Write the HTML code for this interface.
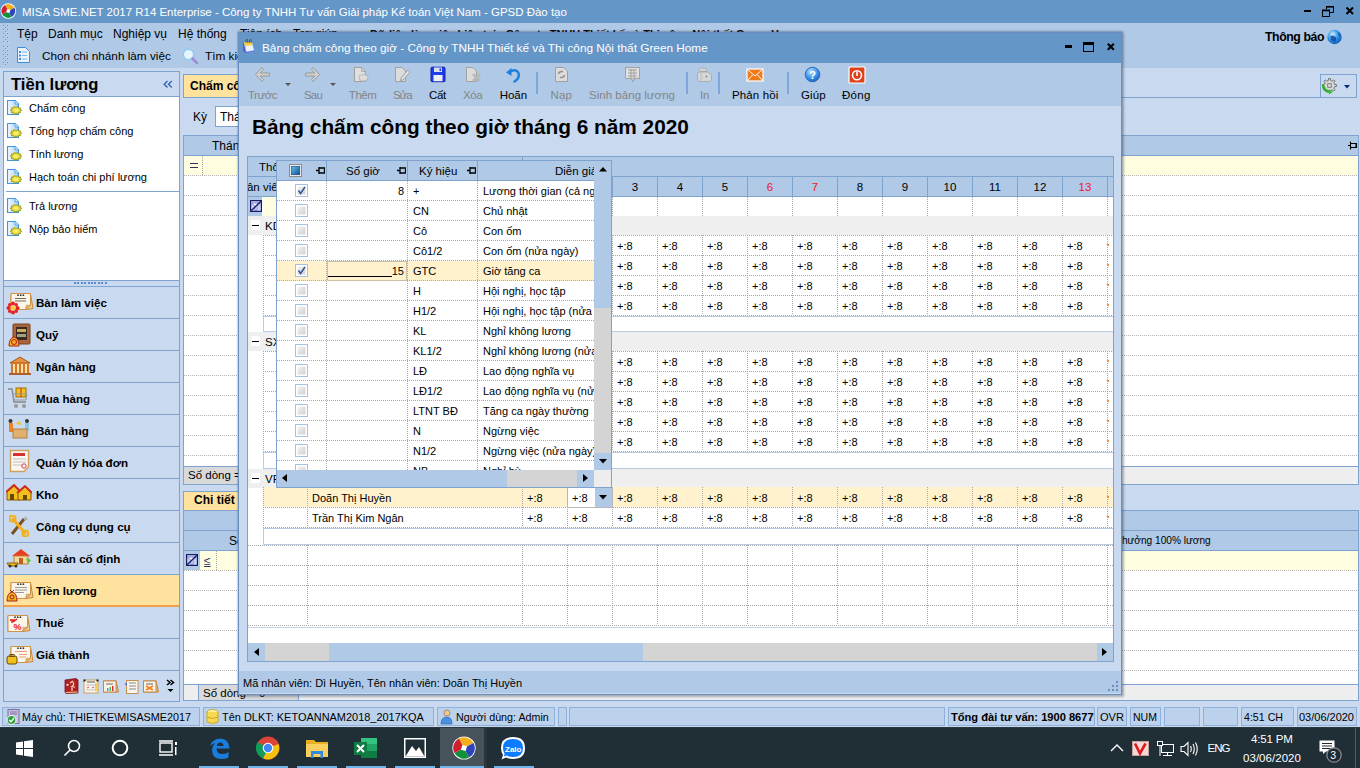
<!DOCTYPE html>
<html><head><meta charset="utf-8">
<style>
*{margin:0;padding:0;box-sizing:border-box}
html,body{width:1360px;height:768px;overflow:hidden;background:#C9DAF0;font-family:"Liberation Sans",sans-serif;font-size:12px;color:#000}
.a{position:absolute}
.t{position:absolute;white-space:nowrap;line-height:16px}
svg{position:absolute}
</style></head><body>
<div class="a" style="left:0px;top:0px;width:1360px;height:23px;background:#6596C8;"></div>
<svg class="a" style="left:0px;top:3px" width="17" height="17" viewBox="0 0 17 17"><circle cx="8.3" cy="8" r="7.8" fill="#fff"/><g transform="rotate(-28 8.3 8)">
 <path d="M8.3 8 L8.3 1.1 A6.9 6.9 0 0 1 15.2 8 Z" fill="#F2B01E"/>
 <path d="M8.3 8 L15.2 8 A6.9 6.9 0 0 1 8.3 14.9 Z" fill="#2E44BC"/>
 <path d="M8.3 8 L8.3 14.9 A6.9 6.9 0 0 1 1.4 8 Z" fill="#12913A"/>
 <path d="M8.3 8 L1.4 8 A6.9 6.9 0 0 1 8.3 1.1 Z" fill="#D0202E"/>
 <rect x="6.6" y="6.3" width="3.4" height="3.4" transform="rotate(45 8.3 8)" fill="#fff"/></g></svg>
<div class="t" style="top:4.03px;font-size:11.47px;color:#fff;left:22px;">MISA SME.NET 2017 R14 Enterprise - Công ty TNHH Tư vấn Giải pháp Kế toán Việt Nam - GPSD Đào tạo</div>
<div class="a" style="left:1304px;top:10px;width:7px;height:2px;background:#000;"></div>
<svg class="a" style="left:1321px;top:5px" width="14" height="12" viewBox="0 0 14 12"><path d="M5.5 4V1.5H12.5V7.5H9" fill="none" stroke="#000" stroke-width="1"/><rect x="5" y="1" width="8" height="1.6" fill="#000"/><rect x="1.5" y="5.5" width="7" height="6" fill="none" stroke="#000"/><rect x="1" y="4.5" width="8" height="1.8" fill="#000"/></svg>
<svg class="a" style="left:1345px;top:6px" width="10" height="10" viewBox="0 0 10 10"><path d="M1.5 1.5L8 8M8 1.5L1.5 8" stroke="#000" stroke-width="2"/></svg>
<div class="a" style="left:0px;top:23px;width:1360px;height:45px;background:#AFC9E7;"></div>
<div class="a" style="left:4px;top:26px;width:1px;height:1px;background:#C2D6EE;"></div>
<div class="a" style="left:3px;top:25px;width:1px;height:1px;background:#8A8A8A;"></div>
<div class="a" style="left:8px;top:26px;width:1px;height:1px;background:#C2D6EE;"></div>
<div class="a" style="left:7px;top:25px;width:1px;height:1px;background:#8A8A8A;"></div>
<div class="a" style="left:6px;top:28px;width:1px;height:1px;background:#C2D6EE;"></div>
<div class="a" style="left:5px;top:27px;width:1px;height:1px;background:#8A8A8A;"></div>
<div class="a" style="left:4px;top:30px;width:1px;height:1px;background:#C2D6EE;"></div>
<div class="a" style="left:3px;top:29px;width:1px;height:1px;background:#8A8A8A;"></div>
<div class="a" style="left:8px;top:30px;width:1px;height:1px;background:#C2D6EE;"></div>
<div class="a" style="left:7px;top:29px;width:1px;height:1px;background:#8A8A8A;"></div>
<div class="a" style="left:6px;top:32px;width:1px;height:1px;background:#C2D6EE;"></div>
<div class="a" style="left:5px;top:31px;width:1px;height:1px;background:#8A8A8A;"></div>
<div class="a" style="left:4px;top:34px;width:1px;height:1px;background:#C2D6EE;"></div>
<div class="a" style="left:3px;top:33px;width:1px;height:1px;background:#8A8A8A;"></div>
<div class="a" style="left:8px;top:34px;width:1px;height:1px;background:#C2D6EE;"></div>
<div class="a" style="left:7px;top:33px;width:1px;height:1px;background:#8A8A8A;"></div>
<div class="a" style="left:6px;top:36px;width:1px;height:1px;background:#C2D6EE;"></div>
<div class="a" style="left:5px;top:35px;width:1px;height:1px;background:#8A8A8A;"></div>
<div class="a" style="left:4px;top:38px;width:1px;height:1px;background:#C2D6EE;"></div>
<div class="a" style="left:3px;top:37px;width:1px;height:1px;background:#8A8A8A;"></div>
<div class="a" style="left:8px;top:38px;width:1px;height:1px;background:#C2D6EE;"></div>
<div class="a" style="left:7px;top:37px;width:1px;height:1px;background:#8A8A8A;"></div>
<div class="a" style="left:6px;top:40px;width:1px;height:1px;background:#C2D6EE;"></div>
<div class="a" style="left:5px;top:39px;width:1px;height:1px;background:#8A8A8A;"></div>
<div class="a" style="left:4px;top:42px;width:1px;height:1px;background:#C2D6EE;"></div>
<div class="a" style="left:3px;top:41px;width:1px;height:1px;background:#8A8A8A;"></div>
<div class="a" style="left:8px;top:42px;width:1px;height:1px;background:#C2D6EE;"></div>
<div class="a" style="left:7px;top:41px;width:1px;height:1px;background:#8A8A8A;"></div>
<div class="a" style="left:4px;top:47px;width:1px;height:1px;background:#C2D6EE;"></div>
<div class="a" style="left:3px;top:46px;width:1px;height:1px;background:#8A8A8A;"></div>
<div class="a" style="left:8px;top:47px;width:1px;height:1px;background:#C2D6EE;"></div>
<div class="a" style="left:7px;top:46px;width:1px;height:1px;background:#8A8A8A;"></div>
<div class="a" style="left:6px;top:49px;width:1px;height:1px;background:#C2D6EE;"></div>
<div class="a" style="left:5px;top:48px;width:1px;height:1px;background:#8A8A8A;"></div>
<div class="a" style="left:4px;top:51px;width:1px;height:1px;background:#C2D6EE;"></div>
<div class="a" style="left:3px;top:50px;width:1px;height:1px;background:#8A8A8A;"></div>
<div class="a" style="left:8px;top:51px;width:1px;height:1px;background:#C2D6EE;"></div>
<div class="a" style="left:7px;top:50px;width:1px;height:1px;background:#8A8A8A;"></div>
<div class="a" style="left:6px;top:53px;width:1px;height:1px;background:#C2D6EE;"></div>
<div class="a" style="left:5px;top:52px;width:1px;height:1px;background:#8A8A8A;"></div>
<div class="a" style="left:4px;top:55px;width:1px;height:1px;background:#C2D6EE;"></div>
<div class="a" style="left:3px;top:54px;width:1px;height:1px;background:#8A8A8A;"></div>
<div class="a" style="left:8px;top:55px;width:1px;height:1px;background:#C2D6EE;"></div>
<div class="a" style="left:7px;top:54px;width:1px;height:1px;background:#8A8A8A;"></div>
<div class="a" style="left:6px;top:57px;width:1px;height:1px;background:#C2D6EE;"></div>
<div class="a" style="left:5px;top:56px;width:1px;height:1px;background:#8A8A8A;"></div>
<div class="a" style="left:4px;top:59px;width:1px;height:1px;background:#C2D6EE;"></div>
<div class="a" style="left:3px;top:58px;width:1px;height:1px;background:#8A8A8A;"></div>
<div class="a" style="left:8px;top:59px;width:1px;height:1px;background:#C2D6EE;"></div>
<div class="a" style="left:7px;top:58px;width:1px;height:1px;background:#8A8A8A;"></div>
<div class="a" style="left:6px;top:61px;width:1px;height:1px;background:#C2D6EE;"></div>
<div class="a" style="left:5px;top:60px;width:1px;height:1px;background:#8A8A8A;"></div>
<div class="a" style="left:4px;top:63px;width:1px;height:1px;background:#C2D6EE;"></div>
<div class="a" style="left:3px;top:62px;width:1px;height:1px;background:#8A8A8A;"></div>
<div class="a" style="left:8px;top:63px;width:1px;height:1px;background:#C2D6EE;"></div>
<div class="a" style="left:7px;top:62px;width:1px;height:1px;background:#8A8A8A;"></div>
<div class="a" style="left:6px;top:65px;width:1px;height:1px;background:#C2D6EE;"></div>
<div class="a" style="left:5px;top:64px;width:1px;height:1px;background:#8A8A8A;"></div>
<div class="t" style="top:25.84px;font-size:12px;left:17px;">Tệp</div>
<div class="t" style="top:25.84px;font-size:12px;left:48px;">Danh mục</div>
<div class="t" style="top:25.84px;font-size:12px;left:113px;">Nghiệp vụ</div>
<div class="t" style="top:25.84px;font-size:12px;left:178px;">Hệ thống</div>
<div class="t" style="top:25.84px;font-size:12px;left:240px;">Tiện ích</div>
<div class="t" style="top:25.84px;font-size:12px;left:293px;">Trợ giúp</div>
<div class="t" style="top:26.19px;font-size:11px;font-weight:bold;left:370px;">Dữ liệu làm việc hiện tại - Công ty TNHH Thiết kế và Thi công Nội thất Green Home</div>
<svg class="a" style="left:17px;top:47px" width="13" height="16" viewBox="0 0 13 16"><path d="M0.5 0.5H8.5L12.5 4.5V15.5H0.5Z" fill="#EAF3FC" stroke="#3F8FD8"/><rect x="2" y="4" width="2" height="2" fill="#3F8FD8"/><rect x="2" y="7.5" width="2" height="2" fill="#3F8FD8"/><rect x="2" y="11" width="2" height="2" fill="#3F8FD8"/><path d="M5 5H10M5 8.5H10M5 12H10" stroke="#7FB4E6"/></svg>
<div class="t" style="top:47.92px;font-size:11.78px;left:42px;">Chọn chi nhánh làm việc</div>
<svg class="a" style="left:182px;top:48px" width="17" height="17" viewBox="0 0 17 17"><circle cx="6.5" cy="6.5" r="5.3" fill="#E6F4FD" stroke="#90CBEF" stroke-width="1.6"/><path d="M10.5 10.5L15 15" stroke="#A08CD6" stroke-width="2.6" stroke-linecap="round"/></svg>
<div class="t" style="top:47.91px;font-size:11.8px;left:205px;">Tìm kiếm</div>
<div class="t" style="top:28.74px;font-size:12.3px;font-weight:bold;left:1265px;letter-spacing:-0.427px;">Thông báo</div>
<svg class="a" style="left:1327px;top:29px" width="16" height="16" viewBox="0 0 16 16"><defs><radialGradient id="gl" cx="38%" cy="32%" r="70%"><stop offset="0" stop-color="#D4F0FF"/><stop offset="0.5" stop-color="#3A9AE8"/><stop offset="1" stop-color="#0A5CB8"/></radialGradient></defs><circle cx="7.5" cy="8" r="7.2" fill="url(#gl)"/><path d="M3.5 7Q6 5.5 8.5 8Q10 10.5 8 12.5Q5.5 13 4 10.5Z" fill="#0A3C9A" opacity="0.75"/><path d="M11 3.5Q13.5 5 13.8 8Q12 7 11 5Z" fill="#0A3C9A" opacity="0.7"/></svg>
<div class="a" style="left:3px;top:71px;width:177px;height:631px;background:#C9DAF0;border:1px solid #7FA3CF"></div>
<div class="a" style="left:4px;top:96px;width:175px;height:1px;background:#7FA3CF;"></div>
<div class="t" style="top:77.22px;font-size:16.67px;font-weight:bold;left:11px;">Tiền lương</div>
<svg class="a" style="left:163px;top:80px" width="10" height="9" viewBox="0 0 10 9"><path d="M4.5 1L1.2 4.3L4.5 7.6M8.8 1L5.5 4.3L8.8 7.6" fill="none" stroke="#3A66B0" stroke-width="1.4"/></svg>
<div class="a" style="left:4px;top:97px;width:175px;height:183px;background:#fff;"></div>
<div class="a" style="left:6px;top:191px;width:173px;height:1px;background:#7FA3CF;"></div>
<svg class="a" style="left:6px;top:99px" width="17" height="17" viewBox="0 0 17 17"><defs><linearGradient id="dg" x1="0" y1="0" x2="1" y2="0"><stop offset="0" stop-color="#F4F8FF"/><stop offset="1" stop-color="#A8D0F4"/></linearGradient><radialGradient id="sg"><stop offset="0" stop-color="#FFF880"/><stop offset="1" stop-color="#D8C820"/></radialGradient></defs><path d="M1.5 1.5H9L12.5 5V15.5H1.5Z" fill="url(#dg)" stroke="#3C96E0" stroke-width="1.1" stroke-linejoin="round"/><path d="M9 1.5V5H12.5" fill="#DDEEFF" stroke="#3C96E0" stroke-width="0.8"/><polygon points="15.80,11.30 13.97,12.19 14.69,13.65 12.45,13.63 11.79,15.10 10.00,14.18 8.21,15.10 7.55,13.63 5.31,13.65 6.03,12.19 4.20,11.30 6.03,10.41 5.31,8.95 7.55,8.97 8.21,7.50 10.00,8.42 11.79,7.50 12.45,8.97 14.69,8.95 13.97,10.41" fill="url(#sg)" stroke="#A09A10" stroke-width="0.9"/></svg>
<div class="t" style="top:100.19px;font-size:11px;left:29px;">Chấm công</div>
<svg class="a" style="left:6px;top:122px" width="17" height="17" viewBox="0 0 17 17"><defs><linearGradient id="dg" x1="0" y1="0" x2="1" y2="0"><stop offset="0" stop-color="#F4F8FF"/><stop offset="1" stop-color="#A8D0F4"/></linearGradient><radialGradient id="sg"><stop offset="0" stop-color="#FFF880"/><stop offset="1" stop-color="#D8C820"/></radialGradient></defs><path d="M1.5 1.5H9L12.5 5V15.5H1.5Z" fill="url(#dg)" stroke="#3C96E0" stroke-width="1.1" stroke-linejoin="round"/><path d="M9 1.5V5H12.5" fill="#DDEEFF" stroke="#3C96E0" stroke-width="0.8"/><polygon points="15.80,11.30 13.97,12.19 14.69,13.65 12.45,13.63 11.79,15.10 10.00,14.18 8.21,15.10 7.55,13.63 5.31,13.65 6.03,12.19 4.20,11.30 6.03,10.41 5.31,8.95 7.55,8.97 8.21,7.50 10.00,8.42 11.79,7.50 12.45,8.97 14.69,8.95 13.97,10.41" fill="url(#sg)" stroke="#A09A10" stroke-width="0.9"/></svg>
<div class="t" style="top:123.19px;font-size:11px;left:29px;">Tổng hợp chấm công</div>
<svg class="a" style="left:6px;top:145px" width="17" height="17" viewBox="0 0 17 17"><defs><linearGradient id="dg" x1="0" y1="0" x2="1" y2="0"><stop offset="0" stop-color="#F4F8FF"/><stop offset="1" stop-color="#A8D0F4"/></linearGradient><radialGradient id="sg"><stop offset="0" stop-color="#FFF880"/><stop offset="1" stop-color="#D8C820"/></radialGradient></defs><path d="M1.5 1.5H9L12.5 5V15.5H1.5Z" fill="url(#dg)" stroke="#3C96E0" stroke-width="1.1" stroke-linejoin="round"/><path d="M9 1.5V5H12.5" fill="#DDEEFF" stroke="#3C96E0" stroke-width="0.8"/><polygon points="15.80,11.30 13.97,12.19 14.69,13.65 12.45,13.63 11.79,15.10 10.00,14.18 8.21,15.10 7.55,13.63 5.31,13.65 6.03,12.19 4.20,11.30 6.03,10.41 5.31,8.95 7.55,8.97 8.21,7.50 10.00,8.42 11.79,7.50 12.45,8.97 14.69,8.95 13.97,10.41" fill="url(#sg)" stroke="#A09A10" stroke-width="0.9"/></svg>
<div class="t" style="top:146.19px;font-size:11px;left:29px;">Tính lương</div>
<svg class="a" style="left:6px;top:168px" width="17" height="17" viewBox="0 0 17 17"><defs><linearGradient id="dg" x1="0" y1="0" x2="1" y2="0"><stop offset="0" stop-color="#F4F8FF"/><stop offset="1" stop-color="#A8D0F4"/></linearGradient><radialGradient id="sg"><stop offset="0" stop-color="#FFF880"/><stop offset="1" stop-color="#D8C820"/></radialGradient></defs><path d="M1.5 1.5H9L12.5 5V15.5H1.5Z" fill="url(#dg)" stroke="#3C96E0" stroke-width="1.1" stroke-linejoin="round"/><path d="M9 1.5V5H12.5" fill="#DDEEFF" stroke="#3C96E0" stroke-width="0.8"/><polygon points="15.80,11.30 13.97,12.19 14.69,13.65 12.45,13.63 11.79,15.10 10.00,14.18 8.21,15.10 7.55,13.63 5.31,13.65 6.03,12.19 4.20,11.30 6.03,10.41 5.31,8.95 7.55,8.97 8.21,7.50 10.00,8.42 11.79,7.50 12.45,8.97 14.69,8.95 13.97,10.41" fill="url(#sg)" stroke="#A09A10" stroke-width="0.9"/></svg>
<div class="t" style="top:169.19px;font-size:11px;left:29px;">Hạch toán chi phí lương</div>
<svg class="a" style="left:6px;top:197px" width="17" height="17" viewBox="0 0 17 17"><defs><linearGradient id="dg" x1="0" y1="0" x2="1" y2="0"><stop offset="0" stop-color="#F4F8FF"/><stop offset="1" stop-color="#A8D0F4"/></linearGradient><radialGradient id="sg"><stop offset="0" stop-color="#FFF880"/><stop offset="1" stop-color="#D8C820"/></radialGradient></defs><path d="M1.5 1.5H9L12.5 5V15.5H1.5Z" fill="url(#dg)" stroke="#3C96E0" stroke-width="1.1" stroke-linejoin="round"/><path d="M9 1.5V5H12.5" fill="#DDEEFF" stroke="#3C96E0" stroke-width="0.8"/><polygon points="15.80,11.30 13.97,12.19 14.69,13.65 12.45,13.63 11.79,15.10 10.00,14.18 8.21,15.10 7.55,13.63 5.31,13.65 6.03,12.19 4.20,11.30 6.03,10.41 5.31,8.95 7.55,8.97 8.21,7.50 10.00,8.42 11.79,7.50 12.45,8.97 14.69,8.95 13.97,10.41" fill="url(#sg)" stroke="#A09A10" stroke-width="0.9"/></svg>
<div class="t" style="top:198.19px;font-size:11px;left:29px;">Trả lương</div>
<svg class="a" style="left:6px;top:220px" width="17" height="17" viewBox="0 0 17 17"><defs><linearGradient id="dg" x1="0" y1="0" x2="1" y2="0"><stop offset="0" stop-color="#F4F8FF"/><stop offset="1" stop-color="#A8D0F4"/></linearGradient><radialGradient id="sg"><stop offset="0" stop-color="#FFF880"/><stop offset="1" stop-color="#D8C820"/></radialGradient></defs><path d="M1.5 1.5H9L12.5 5V15.5H1.5Z" fill="url(#dg)" stroke="#3C96E0" stroke-width="1.1" stroke-linejoin="round"/><path d="M9 1.5V5H12.5" fill="#DDEEFF" stroke="#3C96E0" stroke-width="0.8"/><polygon points="15.80,11.30 13.97,12.19 14.69,13.65 12.45,13.63 11.79,15.10 10.00,14.18 8.21,15.10 7.55,13.63 5.31,13.65 6.03,12.19 4.20,11.30 6.03,10.41 5.31,8.95 7.55,8.97 8.21,7.50 10.00,8.42 11.79,7.50 12.45,8.97 14.69,8.95 13.97,10.41" fill="url(#sg)" stroke="#A09A10" stroke-width="0.9"/></svg>
<div class="t" style="top:221.19px;font-size:11px;left:29px;">Nộp bảo hiểm</div>
<div class="a" style="left:4px;top:280px;width:175px;height:1px;background:#7FA3CF;"></div>
<div class="a" style="left:74.0px;top:282px;width:2px;height:2px;background:#5A8AD0;"></div>
<div class="a" style="left:77.4px;top:282px;width:2px;height:2px;background:#5A8AD0;"></div>
<div class="a" style="left:80.8px;top:282px;width:2px;height:2px;background:#5A8AD0;"></div>
<div class="a" style="left:84.2px;top:282px;width:2px;height:2px;background:#5A8AD0;"></div>
<div class="a" style="left:87.6px;top:282px;width:2px;height:2px;background:#5A8AD0;"></div>
<div class="a" style="left:91.0px;top:282px;width:2px;height:2px;background:#5A8AD0;"></div>
<div class="a" style="left:94.4px;top:282px;width:2px;height:2px;background:#5A8AD0;"></div>
<div class="a" style="left:97.8px;top:282px;width:2px;height:2px;background:#5A8AD0;"></div>
<div class="a" style="left:101.2px;top:282px;width:2px;height:2px;background:#5A8AD0;"></div>
<div class="a" style="left:104.6px;top:282px;width:2px;height:2px;background:#5A8AD0;"></div>
<div class="a" style="left:4px;top:286px;width:175px;height:1px;background:#7FA3CF;"></div>
<div class="t" style="top:294.98px;font-size:11.6px;font-weight:bold;left:36px;">Bàn làm việc</div>
<div class="a" style="left:4px;top:318px;width:175px;height:1px;background:#7FA3CF;"></div>
<div class="t" style="top:326.98px;font-size:11.6px;font-weight:bold;left:36px;">Quỹ</div>
<div class="a" style="left:4px;top:350px;width:175px;height:1px;background:#7FA3CF;"></div>
<div class="t" style="top:358.98px;font-size:11.6px;font-weight:bold;left:36px;">Ngân hàng</div>
<div class="a" style="left:4px;top:382px;width:175px;height:1px;background:#7FA3CF;"></div>
<div class="t" style="top:390.98px;font-size:11.6px;font-weight:bold;left:36px;">Mua hàng</div>
<div class="a" style="left:4px;top:414px;width:175px;height:1px;background:#7FA3CF;"></div>
<div class="t" style="top:422.98px;font-size:11.6px;font-weight:bold;left:36px;">Bán hàng</div>
<div class="a" style="left:4px;top:446px;width:175px;height:1px;background:#7FA3CF;"></div>
<div class="t" style="top:454.98px;font-size:11.6px;font-weight:bold;left:36px;">Quản lý hóa đơn</div>
<div class="a" style="left:4px;top:478px;width:175px;height:1px;background:#7FA3CF;"></div>
<div class="t" style="top:486.98px;font-size:11.6px;font-weight:bold;left:36px;">Kho</div>
<div class="a" style="left:4px;top:510px;width:175px;height:1px;background:#7FA3CF;"></div>
<div class="t" style="top:518.98px;font-size:11.6px;font-weight:bold;left:36px;">Công cụ dụng cụ</div>
<div class="a" style="left:4px;top:542px;width:175px;height:1px;background:#7FA3CF;"></div>
<div class="t" style="top:550.98px;font-size:11.6px;font-weight:bold;left:36px;">Tài sản cố định</div>
<div class="a" style="left:4px;top:575px;width:175px;height:31px;background:#FFE29E;"></div>
<div class="a" style="left:4px;top:574px;width:175px;height:1px;background:#7FA3CF;"></div>
<div class="t" style="top:582.98px;font-size:11.6px;font-weight:bold;left:36px;">Tiền lương</div>
<div class="a" style="left:4px;top:606px;width:175px;height:1px;background:#7FA3CF;"></div>
<div class="t" style="top:614.98px;font-size:11.6px;font-weight:bold;left:36px;">Thuế</div>
<div class="a" style="left:4px;top:638px;width:175px;height:1px;background:#7FA3CF;"></div>
<div class="t" style="top:646.98px;font-size:11.6px;font-weight:bold;left:36px;">Giá thành</div>
<div class="a" style="left:4px;top:605px;width:175px;height:2px;background:#F2A04A;"></div>
<div class="a" style="left:4px;top:670px;width:175px;height:1px;background:#7FA3CF;"></div>
<svg class="a" style="left:10px;top:292px" width="24" height="19" viewBox="0 0 24 19"><path d="M1 1.5H20.5L23 16.5L16 17.5H1Z" fill="#EDCB90" stroke="#C88838"/><path d="M1 1.5H20.5V13L15.5 17.5H1Z" fill="#FBF5EA" stroke="#D09448"/><path d="M15.5 17.5L16.3 13.3H20.5Z" fill="#E4B878" stroke="#C88838" stroke-width="0.6"/><circle cx="8" cy="3.2" r="0.9" fill="#333"/><circle cx="10.7" cy="3.2" r="0.9" fill="#333"/><circle cx="13.4" cy="3.2" r="0.9" fill="#333"/><path d="M5 6.5H16M5 9H16" stroke="#7a6a50" stroke-width="1.1"/></svg>
<svg class="a" style="left:6px;top:301px" width="14" height="14" viewBox="0 0 14 14"><g fill="#E82020"><circle cx="7" cy="2.5" r="2"/><circle cx="7" cy="11.5" r="2"/><circle cx="2.5" cy="7" r="2"/><circle cx="11.5" cy="7" r="2"/><circle cx="3.8" cy="3.8" r="1.8"/><circle cx="10.2" cy="10.2" r="1.8"/><circle cx="3.8" cy="10.2" r="1.8"/><circle cx="10.2" cy="3.8" r="1.8"/></g><circle cx="7" cy="7" r="2.3" fill="#F8D040"/></svg>
<svg class="a" style="left:8px;top:323px" width="24" height="24" viewBox="0 0 24 24"><rect x="5" y="1" width="17" height="20" rx="1" fill="#A8643A" stroke="#7A4020"/><rect x="8" y="4" width="11" height="13" fill="#3A2A20"/><rect x="9" y="6" width="9" height="3" fill="#C8B060"/><rect x="9" y="11" width="9" height="3" fill="#A0A080"/><path d="M1 23Q1 15 6 14Q11 15 11 23Z" fill="#F0B020" stroke="#B02020"/><circle cx="6" cy="19" r="2.5" fill="none" stroke="#B02020"/></svg>
<svg class="a" style="left:8px;top:356px" width="24" height="20" viewBox="0 0 24 20"><path d="M2 7L12 1L22 7Z" fill="#E89040" stroke="#A05A20"/><rect x="3" y="7" width="18" height="10" fill="#D07A30"/><rect x="5" y="8" width="2" height="9" fill="#FFE0A0"/><rect x="9" y="8" width="2" height="9" fill="#FFE0A0"/><rect x="13" y="8" width="2" height="9" fill="#FFE0A0"/><rect x="17" y="8" width="2" height="9" fill="#FFE0A0"/><rect x="1" y="17" width="22" height="2" fill="#B06030"/></svg>
<svg class="a" style="left:7px;top:386px" width="24" height="24" viewBox="0 0 24 24"><path d="M1 3L5 3L7 16H19" fill="none" stroke="#888" stroke-width="1.4"/><rect x="9" y="2" width="10" height="9" fill="#F2C020" stroke="#A07000"/><path d="M14 2V11" stroke="#D02020"/><path d="M6 8H20L19 14H7Z" fill="none" stroke="#999"/><circle cx="9" cy="20" r="2" fill="#999"/><circle cx="17" cy="20" r="2" fill="#999"/></svg>
<svg class="a" style="left:7px;top:418px" width="24" height="22" viewBox="0 0 24 22"><circle cx="3.5" cy="3" r="2" fill="#333"/><rect x="2" y="5" width="4" height="9" fill="#F08020"/><circle cx="20" cy="3" r="2" fill="#333"/><rect x="18" y="5" width="4" height="8" fill="#8CC0E0"/><rect x="6" y="11" width="14" height="9" fill="#E0B070" stroke="#B08040"/><path d="M9 6L12 3L15 7Z" fill="#F2C020"/></svg>
<svg class="a" style="left:9px;top:449px" width="21" height="24" viewBox="0 0 21 24"><path d="M1.5 1.5H19.5V18L15 22.5H1.5Z" fill="#FAF6EE" stroke="#D0A060" stroke-width="1.4"/><rect x="4" y="4" width="12" height="3" fill="#D83030"/><path d="M4 10H17M4 13H17M4 16H14" stroke="#C0C0C0"/><circle cx="15" cy="17" r="2.2" fill="none" stroke="#D04060"/></svg>
<svg class="a" style="left:6px;top:484px" width="26" height="18" viewBox="0 0 26 18"><path d="M1 8L8 2L14 8V16H1Z" fill="#F2C020" stroke="#8A5A00"/><path d="M0 8L8 1L15 8" fill="none" stroke="#D03020" stroke-width="2"/><path d="M12 9L19 3L25 9V16H12Z" fill="#F2C020" stroke="#8A5A00"/><path d="M11 9L19 2L26 9" fill="none" stroke="#D03020" stroke-width="2"/><rect x="4" y="10" width="4" height="6" fill="#6A4A00"/><rect x="17" y="11" width="4" height="5" fill="#6A4A00"/></svg>
<svg class="a" style="left:9px;top:515px" width="20" height="22" viewBox="0 0 20 22"><path d="M3 19L15 4" stroke="#7A5020" stroke-width="3"/><path d="M16 2L18 5" stroke="#aaa" stroke-width="2"/><path d="M3 3L17 19" stroke="#F0B020" stroke-width="3"/><circle cx="3.5" cy="3.5" r="3" fill="none" stroke="#F0B020" stroke-width="2"/><circle cx="16.5" cy="18.5" r="3" fill="none" stroke="#F0B020" stroke-width="2"/></svg>
<svg class="a" style="left:6px;top:548px" width="26" height="20" viewBox="0 0 26 20"><path d="M6 8L15 1L24 8Z" fill="#E84020"/><rect x="8" y="8" width="14" height="8" fill="#F6D8A0" stroke="#C08040"/><rect x="13" y="10" width="4" height="6" fill="#C06020"/><path d="M1 15H12L10 18H3Z" fill="#F2C020" stroke="#8A6000"/><circle cx="4" cy="18" r="1.5" fill="#333"/><circle cx="10" cy="18" r="1.5" fill="#333"/><path d="M20 10L25 12L22 16Z" fill="#60C040"/></svg>
<svg class="a" style="left:10px;top:581px" width="24" height="19" viewBox="0 0 24 19"><path d="M1 1.5H20.5L23 16.5L16 17.5H1Z" fill="#EDCB90" stroke="#C88838"/><path d="M1 1.5H20.5V13L15.5 17.5H1Z" fill="#FBF5EA" stroke="#D09448"/><path d="M15.5 17.5L16.3 13.3H20.5Z" fill="#E4B878" stroke="#C88838" stroke-width="0.6"/><circle cx="8" cy="3.2" r="0.9" fill="#333"/><circle cx="10.7" cy="3.2" r="0.9" fill="#333"/><circle cx="13.4" cy="3.2" r="0.9" fill="#333"/><path d="M5 6.5H17M5 9H17M5 11.5H14" stroke="#9a9a9a" stroke-width="1.1"/></svg>
<svg class="a" style="left:6px;top:588px" width="12" height="14" viewBox="0 0 12 14"><path d="M1 13Q1 5 6 4Q11 5 11 13Z" fill="#F0B020" stroke="#B02020"/><path d="M4 2L6 4L8 2" stroke="#B02020" fill="none"/><circle cx="6" cy="9" r="2" fill="none" stroke="#B02020"/></svg>
<svg class="a" style="left:7px;top:614px" width="24" height="19" viewBox="0 0 24 19"><path d="M1 1.5H20.5L23 16.5L16 17.5H1Z" fill="#EDCB90" stroke="#C88838"/><path d="M1 1.5H20.5V13L15.5 17.5H1Z" fill="#FBF5EA" stroke="#D09448"/><path d="M15.5 17.5L16.3 13.3H20.5Z" fill="#E4B878" stroke="#C88838" stroke-width="0.6"/><circle cx="8" cy="3.2" r="0.9" fill="#333"/><circle cx="10.7" cy="3.2" r="0.9" fill="#333"/><circle cx="13.4" cy="3.2" r="0.9" fill="#333"/><text x="6.5" y="15.5" font-size="9" fill="#E81818" font-weight="bold" font-family="Liberation Sans">%</text><path d="M3 6H8M5 6V9M6 8L10 5" stroke="#E81818" stroke-width="1.4"/></svg>
<svg class="a" style="left:10px;top:645px" width="24" height="19" viewBox="0 0 24 19"><path d="M1 1.5H20.5L23 16.5L16 17.5H1Z" fill="#EDCB90" stroke="#C88838"/><path d="M1 1.5H20.5V13L15.5 17.5H1Z" fill="#FBF5EA" stroke="#D09448"/><path d="M15.5 17.5L16.3 13.3H20.5Z" fill="#E4B878" stroke="#C88838" stroke-width="0.6"/><circle cx="8" cy="3.2" r="0.9" fill="#333"/><circle cx="10.7" cy="3.2" r="0.9" fill="#333"/><circle cx="13.4" cy="3.2" r="0.9" fill="#333"/><path d="M5 6.5H17M9 9.5H17M9 12H16" stroke="#E8A080" stroke-width="1.1"/></svg>
<svg class="a" style="left:6px;top:654px" width="12" height="11" viewBox="0 0 12 11"><rect x="1" y="2" width="10" height="8" rx="2" fill="#F0C020" stroke="#6A4A00"/><rect x="4" y="0.5" width="4" height="2" fill="none" stroke="#6A4A00"/></svg>
<svg class="a" style="left:64px;top:678px" width="15" height="16" viewBox="0 0 15 16"><path d="M1 2L12 0.5L14 2V15L2 15.5L1 14Z" fill="#B02028" stroke="#801018" stroke-width="0.8"/><path d="M2 14.5L13.5 14" stroke="#F0D090" stroke-width="1.2"/><rect x="2.5" y="6" width="2" height="1.6" fill="#fff"/><path d="M6 5L9 3M9 4Q11 7 7 9H11M8 10V13" stroke="#F8E0A0" stroke-width="1.2" fill="none"/></svg>
<svg class="a" style="left:83px;top:679px" width="16" height="15" viewBox="0 0 16 15"><rect x="1" y="1" width="14" height="13" fill="#FAF6EE" stroke="#C8A060"/><rect x="0.5" y="0.5" width="2" height="2" fill="#222"/><rect x="13.5" y="0.5" width="2" height="2" fill="#222"/><path d="M4 3H12" stroke="#555"/><path d="M4 9L6 8M9 9L11 8" stroke="#E06080" stroke-width="1.2"/><path d="M3 6H13M3 11H13" stroke="#C0C0C0"/><path d="M13 4V12" stroke="#F0C020" stroke-width="1.5"/></svg>
<svg class="a" style="left:103px;top:680px" width="16" height="13" viewBox="0 0 16 13"><path d="M0.5 1H13L15.5 12H0.5Z" fill="#E8C890" stroke="#C08040"/><rect x="0.5" y="1" width="12.5" height="11" fill="#FAF4E8" stroke="#C08848"/><path d="M3 4H10" stroke="#666"/><rect x="4" y="8" width="1.5" height="3" fill="#40A0E0"/><rect x="6.5" y="7" width="1.5" height="4" fill="#50C050"/><rect x="9" y="6" width="1.5" height="5" fill="#E03030"/></svg>
<svg class="a" style="left:124px;top:680px" width="15" height="14" viewBox="0 0 15 14"><rect x="2.5" y="0.5" width="11.5" height="13" fill="#FAF6EE" stroke="#C89050"/><path d="M5 3H12M5 6H12M5 9H12" stroke="#888"/><path d="M0.5 4L3 2.5V6Z" fill="#5A6AD0"/></svg>
<svg class="a" style="left:143px;top:680px" width="16" height="13" viewBox="0 0 16 13"><path d="M0.5 1H13L15.5 12H0.5Z" fill="#E8C890" stroke="#C08040"/><rect x="0.5" y="1" width="12.5" height="11" fill="#FAF4E8" stroke="#C08848"/><path d="M3 4H10" stroke="#666"/><path d="M3 6L10 10M10 6L3 10" stroke="#F08020" stroke-width="1.6"/></svg>
<svg class="a" style="left:166px;top:679px" width="9" height="14" viewBox="0 0 9 14"><path d="M1 1L4 3.5L1 6M4.5 1L7.5 3.5L4.5 6" fill="none" stroke="#000" stroke-width="1.5"/><path d="M1.5 10H7.5L4.5 13Z" fill="#000"/></svg>
<div class="a" style="left:183px;top:74px;width:120px;height:24px;background:#FFE29E;border:1px solid #7FA3CF;border-bottom:none"></div>
<div class="t" style="top:77.84px;font-size:12px;font-weight:bold;left:190px;">Chấm công</div>
<div class="a" style="left:183px;top:97px;width:1137px;height:1px;background:#7FA3CF;"></div>
<div class="a" style="left:1320px;top:74px;width:37px;height:24px;background:#C9DAF0;border:1px solid #7FA3CF"></div>
<svg class="a" style="left:1322px;top:78px" width="16" height="17" viewBox="0 0 16 17"><path d="M6.39,2.42 L6.60,0.56 L8.40,0.56 L8.61,2.42 L10.30,3.12 L11.77,1.95 L13.05,3.23 L11.88,4.70 L12.58,6.39 L14.44,6.60 L14.44,8.40 L12.58,8.61 L11.88,10.30 L13.05,11.77 L11.77,13.05 L10.30,11.88 L8.61,12.58 L8.40,14.44 L6.60,14.44 L6.39,12.58 L4.70,11.88 L3.23,13.05 L1.95,11.77 L3.12,10.30 L2.42,8.61 L0.56,8.40 L0.56,6.60 L2.42,6.39 L3.12,4.70 L1.95,3.23 L3.23,1.95 L4.70,3.12Z" fill="#D8D8D8" stroke="#666" stroke-width="0.9"/><rect x="5.8" y="5.8" width="3.4" height="3.4" fill="#E8F0FA" stroke="#666" stroke-width="0.9"/><path d="M1 6.5Q1 13 8 14" fill="none" stroke="#30B030" stroke-width="2.4"/><path d="M7 11L11 14L7 16.5Z" fill="#40C040"/></svg>
<svg class="a" style="left:1344px;top:85px" width="6" height="4" viewBox="0 0 6 4"><path d="M0 0H6L3 3.5Z" fill="#0A2A80"/></svg>
<div class="t" style="top:108.84px;font-size:12px;left:193px;">Kỳ</div>
<div class="a" style="left:215px;top:106px;width:40px;height:21px;background:#fff;border:1px solid #7FA3CF"></div>
<div class="t" style="top:108.84px;font-size:12px;left:220px;">Tháng 6</div>
<div class="a" style="left:183px;top:135px;width:1176px;height:350px;background:#fff;border:1px solid #7FA3CF"></div>
<div class="a" style="left:184px;top:136px;width:1174px;height:19px;background:#AFC9E7;"></div>
<div class="a" style="left:184px;top:155px;width:1174px;height:1px;background:#7FA3CF;"></div>
<div class="t" style="top:137.84px;font-size:12px;left:212px;">Tháng</div>
<svg class="a" style="left:1348px;top:141px" width="10" height="9" viewBox="0 0 10 9"><path d="M0 4.5H2.5M2.5 0.5V8.5M2.5 2.5H8.5V6.5H2.5" fill="none" stroke="#000" stroke-width="1.1"/><rect x="7.5" y="2" width="1.5" height="5" fill="#000"/></svg>
<div class="a" style="left:184px;top:156px;width:1174px;height:19px;background:#FFFDE0;"></div>
<div class="a" style="left:190px;top:163px;width:8px;height:1.3px;background:#303060;"></div>
<div class="a" style="left:190px;top:166.5px;width:8px;height:1.3px;background:#303060;"></div>
<div class="a" style="left:202px;top:156px;width:1px;height:19px;background:repeating-linear-gradient(180deg,#A8A8A8 0 1px,transparent 1px 2px);"></div>
<div class="a" style="left:184px;top:175px;width:1174px;height:1px;background:repeating-linear-gradient(90deg,#B4B4B4 0 1px,transparent 1px 2px);"></div>
<div class="a" style="left:184px;top:195px;width:1174px;height:1px;background:repeating-linear-gradient(90deg,#B4B4B4 0 1px,transparent 1px 2px);"></div>
<div class="a" style="left:184px;top:215px;width:1174px;height:1px;background:repeating-linear-gradient(90deg,#B4B4B4 0 1px,transparent 1px 2px);"></div>
<div class="a" style="left:184px;top:235px;width:1174px;height:1px;background:repeating-linear-gradient(90deg,#B4B4B4 0 1px,transparent 1px 2px);"></div>
<div class="a" style="left:184px;top:255px;width:1174px;height:1px;background:repeating-linear-gradient(90deg,#B4B4B4 0 1px,transparent 1px 2px);"></div>
<div class="a" style="left:184px;top:275px;width:1174px;height:1px;background:repeating-linear-gradient(90deg,#B4B4B4 0 1px,transparent 1px 2px);"></div>
<div class="a" style="left:184px;top:295px;width:1174px;height:1px;background:repeating-linear-gradient(90deg,#B4B4B4 0 1px,transparent 1px 2px);"></div>
<div class="a" style="left:184px;top:315px;width:1174px;height:1px;background:repeating-linear-gradient(90deg,#B4B4B4 0 1px,transparent 1px 2px);"></div>
<div class="a" style="left:184px;top:335px;width:1174px;height:1px;background:repeating-linear-gradient(90deg,#B4B4B4 0 1px,transparent 1px 2px);"></div>
<div class="a" style="left:184px;top:355px;width:1174px;height:1px;background:repeating-linear-gradient(90deg,#B4B4B4 0 1px,transparent 1px 2px);"></div>
<div class="a" style="left:184px;top:375px;width:1174px;height:1px;background:repeating-linear-gradient(90deg,#B4B4B4 0 1px,transparent 1px 2px);"></div>
<div class="a" style="left:184px;top:395px;width:1174px;height:1px;background:repeating-linear-gradient(90deg,#B4B4B4 0 1px,transparent 1px 2px);"></div>
<div class="a" style="left:184px;top:415px;width:1174px;height:1px;background:repeating-linear-gradient(90deg,#B4B4B4 0 1px,transparent 1px 2px);"></div>
<div class="a" style="left:184px;top:435px;width:1174px;height:1px;background:repeating-linear-gradient(90deg,#B4B4B4 0 1px,transparent 1px 2px);"></div>
<div class="a" style="left:184px;top:455px;width:1174px;height:1px;background:repeating-linear-gradient(90deg,#B4B4B4 0 1px,transparent 1px 2px);"></div>
<div class="a" style="left:184px;top:466px;width:1174px;height:18px;background:#EEEEEE;border-top:1px solid #7FA3CF"></div>
<div class="a" style="left:184px;top:467px;width:140px;height:17px;background:#D9D9D9;"></div>
<div class="t" style="top:467.02px;font-size:11.5px;left:188px;">Số dòng = 0</div>
<div class="a" style="left:183px;top:491px;width:120px;height:20px;background:#FFE29E;border:1px solid #7FA3CF;border-bottom:none"></div>
<div class="t" style="top:491.84px;font-size:12px;font-weight:bold;left:194px;">Chi tiết</div>
<div class="a" style="left:183px;top:510px;width:1176px;height:191px;background:#fff;border:1px solid #7FA3CF"></div>
<div class="a" style="left:184px;top:511px;width:1174px;height:19px;background:#AFC9E7;"></div>
<div class="a" style="left:184px;top:530px;width:1174px;height:1px;background:#7FA3CF;"></div>
<div class="a" style="left:184px;top:531px;width:1174px;height:19px;background:#AFC9E7;"></div>
<div class="a" style="left:184px;top:550px;width:1174px;height:1px;background:#7FA3CF;"></div>
<div class="t" style="top:532.84px;font-size:12px;left:229px;">Số chứng từ</div>
<div class="t" style="top:533.48px;font-size:10.15px;left:1093.3246640625px;">Được hưởng 100% lương</div>
<div class="a" style="left:184px;top:551px;width:1174px;height:19px;background:#FFFDE0;"></div>
<div class="a" style="left:184px;top:551px;width:16px;height:19px;background:#AFC9E7;"></div>
<svg class="a" style="left:186px;top:554px" width="12" height="12" viewBox="0 0 12 12"><rect x="0.6" y="0.6" width="10.8" height="10.8" fill="#BEDCF8" stroke="#1E1A5E" stroke-width="1.2"/><path d="M1.5 3H10.5L7 6.5V10.5H5V6.5Z" fill="#fff" stroke="#6A5AD8" stroke-width="0.8"/><path d="M1.2 10.8L10.8 1.2" stroke="#1E1A5E" stroke-width="1.3"/></svg>
<div class="t" style="top:552.84px;font-size:12px;color:#303060;left:204px;"><u>≤</u></div>
<div class="a" style="left:216px;top:551px;width:1px;height:19px;background:repeating-linear-gradient(180deg,#A8A8A8 0 1px,transparent 1px 2px);"></div>
<div class="a" style="left:184px;top:570px;width:1174px;height:1px;background:repeating-linear-gradient(90deg,#B4B4B4 0 1px,transparent 1px 2px);"></div>
<div class="a" style="left:184px;top:590px;width:1174px;height:1px;background:repeating-linear-gradient(90deg,#B4B4B4 0 1px,transparent 1px 2px);"></div>
<div class="a" style="left:184px;top:610px;width:1174px;height:1px;background:repeating-linear-gradient(90deg,#B4B4B4 0 1px,transparent 1px 2px);"></div>
<div class="a" style="left:184px;top:630px;width:1174px;height:1px;background:repeating-linear-gradient(90deg,#B4B4B4 0 1px,transparent 1px 2px);"></div>
<div class="a" style="left:184px;top:650px;width:1174px;height:1px;background:repeating-linear-gradient(90deg,#B4B4B4 0 1px,transparent 1px 2px);"></div>
<div class="a" style="left:184px;top:670px;width:1174px;height:1px;background:repeating-linear-gradient(90deg,#B4B4B4 0 1px,transparent 1px 2px);"></div>
<div class="a" style="left:184px;top:684px;width:1174px;height:16px;background:#EEEEEE;border-top:1px solid #7FA3CF"></div>
<div class="a" style="left:184px;top:685px;width:15px;height:15px;background:#EEEEEE;border-right:1px solid #7FA3CF"></div>
<div class="a" style="left:199px;top:685px;width:100px;height:15px;background:#D9D9D9;border-right:1px solid #7FA3CF"></div>
<div class="t" style="top:685.02px;font-size:11.5px;left:203px;">Số dòng = 0</div>
<div class="a" style="left:238px;top:32px;width:884px;height:663px;background:#C9DAF0;box-shadow:1px 1px 2px 1px rgba(40,60,90,0.35),0 -1px 2px 0 rgba(40,60,90,0.3);border:1px solid #6A8FBF"></div>
<div class="a" style="left:239px;top:33px;width:882px;height:30px;background:#6596C8;"></div>
<svg class="a" style="left:241px;top:38px" width="15" height="17" viewBox="0 0 15 17"><path d="M2 4H11L14 13L5 15L2 13Z" fill="#6A50D8"/><path d="M3 4H11L13.5 12.5L5 14Z" fill="#EAF4FF" stroke="#58A0F0" stroke-width="0.6"/><path d="M3 4H11L11.8 7L3.8 8Z" fill="#F8CF40"/><path d="M5 5Q4.5 1 6 1Q7 1 6.8 5M8.5 5Q8 1 9.5 1Q10.5 1 10.3 5" fill="none" stroke="#555" stroke-width="0.9"/></svg>
<div class="t" style="top:39.91px;font-size:11.8px;color:#fff;left:262px;">Bảng chấm công theo giờ - Công ty TNHH Thiết kế và Thi công Nội thất Green Home</div>
<div class="a" style="left:1065px;top:45px;width:7px;height:3px;background:#000;"></div>
<div class="a" style="left:1083px;top:42px;width:11px;height:10px;border:1px solid #000;border-top:3px solid #000"></div>
<svg class="a" style="left:1106px;top:42px" width="10" height="10" viewBox="0 0 10 10"><path d="M1.8 1.8L7.8 7.8M7.8 1.8L1.8 7.8" stroke="#000" stroke-width="2.2"/></svg>
<div class="a" style="left:239px;top:63px;width:882px;height:43px;background:#AFC9E7;"></div>
<svg class="a" style="left:254px;top:66px" width="17" height="17" viewBox="0 0 17 17"><path d="M8 1.5L1.5 8.5L8 15.5L9.5 13.5L6 10H15.5V7H6L9.5 3.5Z" fill="#D0D0D0" stroke="#9A9A9A" stroke-linejoin="round"/></svg>
<svg class="a" style="left:304px;top:66px" width="17" height="17" viewBox="0 0 17 17"><path d="M9 1.5L15.5 8.5L9 15.5L7.5 13.5L11 10H1.5V7H11L7.5 3.5Z" fill="#D0D0D0" stroke="#9A9A9A" stroke-linejoin="round"/></svg>
<svg class="a" style="left:285px;top:83px" width="7" height="4" viewBox="0 0 7 4"><path d="M0 0H6L3 3Z" fill="#555"/></svg>
<svg class="a" style="left:330px;top:83px" width="7" height="4" viewBox="0 0 7 4"><path d="M0 0H6L3 3Z" fill="#555"/></svg>
<svg class="a" style="left:353px;top:66px" width="17" height="17" viewBox="0 0 17 17"><path d="M1.5 1.5H8.5L12.5 5.5V15.5H1.5Z" fill="#E0E0E0" stroke="#A0A0A0" stroke-width="1.1"/><path d="M8.5 1.5V5.5H12.5" fill="#D0D0D0" stroke="#A0A0A0" stroke-width="0.7"/><polygon points="15.70,11.75 14.21,12.65 14.71,14.04 12.79,14.12 12.11,15.46 10.50,14.68 8.89,15.46 8.21,14.12 6.29,14.04 6.79,12.65 5.30,11.75 6.79,10.85 6.29,9.46 8.21,9.38 8.89,8.04 10.50,8.82 12.11,8.04 12.79,9.38 14.71,9.46 14.21,10.85" fill="#DCDCDC" stroke="#B0B0B0" stroke-width="0.8"/></svg>
<svg class="a" style="left:394px;top:66px" width="17" height="17" viewBox="0 0 17 17"><path d="M1.5 1.5H8L11.5 5V15.5H1.5Z" fill="#DCDCDC" stroke="#A0A0A0"/><path d="M7 12L14 4L16 6L9 14L6.5 14.5Z" fill="#E4E4E4" stroke="#A0A0A0"/></svg>
<svg class="a" style="left:430px;top:66px" width="16" height="17" viewBox="0 0 16 17"><rect x="1" y="1.2" width="14" height="14.5" rx="1" fill="#1E3CE8" stroke="#1020B0"/><rect x="4" y="1.5" width="8" height="4.5" fill="#D8E0F0"/><rect x="9.5" y="2.5" width="1.6" height="2.5" fill="#1E3CE8"/><rect x="3.5" y="9" width="9" height="6.2" fill="#F0F0F0"/></svg>
<svg class="a" style="left:465px;top:66px" width="17" height="17" viewBox="0 0 17 17"><path d="M1.5 1.5H8L11.5 5V15.5H1.5Z" fill="#DCDCDC" stroke="#A0A0A0"/><path d="M8 8L15 15M15 8L8 15" stroke="#B8B8B8" stroke-width="2.5"/></svg>
<svg class="a" style="left:505px;top:66px" width="17" height="17" viewBox="0 0 17 17"><path d="M4 6Q11 2 13.5 7Q15 12 9.5 15.5" fill="none" stroke="#1E7FE0" stroke-width="2.4" stroke-linecap="round"/><path d="M1 6.5L6.5 2L6.5 10Z" fill="#1E7FE0"/></svg>
<div class="a" style="left:536px;top:72px;width:2px;height:22px;background:#7EA6D8;"></div>
<svg class="a" style="left:554px;top:66px" width="15" height="17" viewBox="0 0 15 17"><path d="M1.5 1.5H9.5L13.5 5V15.5H1.5Z" fill="#DCDCDC" stroke="#A0A0A0"/><path d="M4.5 8Q5 5 9 5.5M10.5 9Q10 12 6 11.5" fill="none" stroke="#909090" stroke-width="1.5"/></svg>
<svg class="a" style="left:624px;top:66px" width="17" height="17" viewBox="0 0 17 17"><rect x="1.5" y="1.5" width="14" height="11" fill="#E0E0E0" stroke="#A0A0A0"/><path d="M4 4H13M4 7H13M4 10H13M7 3V12M10 3V12" stroke="#A0A0A0"/><path d="M7 12.5L9 16L10.5 12.5" fill="#C8C8C8" stroke="#A0A0A0"/></svg>
<div class="a" style="left:686px;top:72px;width:2px;height:22px;background:#7EA6D8;"></div>
<svg class="a" style="left:697px;top:67px" width="16" height="16" viewBox="0 0 16 16"><path d="M1.5 2.5L3 1H8.5L10 4.5H3Z" fill="#D2D2D2" stroke="#A8A8A8" stroke-width="0.8"/><path d="M0.5 6.5L2 5H11L14.5 8V13L12.5 14.5H2.5L0.5 12.5Z" fill="#D6D6D6" stroke="#A4A4A4" stroke-width="0.8"/><path d="M4 5.5V14" stroke="#B8B8B8" stroke-width="0.8"/><circle cx="9.5" cy="9.5" r="0.9" fill="#808080"/></svg>
<div class="a" style="left:718px;top:72px;width:2px;height:22px;background:#7EA6D8;"></div>
<svg class="a" style="left:746px;top:68px" width="18" height="14" viewBox="0 0 18 14"><rect x="1" y="1" width="16" height="12" fill="#F07A18" stroke="#fff" stroke-width="1.2"/><path d="M1.5 1.5L9 8L16.5 1.5M1.5 12.5L6.5 7M16.5 12.5L11.5 7" fill="none" stroke="#fff" stroke-width="1"/></svg>
<div class="a" style="left:787px;top:72px;width:2px;height:22px;background:#7EA6D8;"></div>
<svg class="a" style="left:804px;top:66px" width="17" height="17" viewBox="0 0 17 17"><defs><radialGradient id="hp" cx="40%" cy="30%" r="75%"><stop offset="0" stop-color="#B8E0FF"/><stop offset="0.6" stop-color="#3C90E8"/><stop offset="1" stop-color="#1560C0"/></radialGradient></defs><circle cx="8.5" cy="8.5" r="7.3" fill="url(#hp)" stroke="#1A5CB0" stroke-width="0.8"/><text x="5.2" y="12.5" font-size="11" font-weight="bold" fill="#fff" font-family="Liberation Sans">?</text></svg>
<svg class="a" style="left:848px;top:66px" width="18" height="18" viewBox="0 0 18 18"><rect x="1" y="1" width="16" height="16" rx="1" fill="#E0401A" stroke="#fff" stroke-width="1.2"/><circle cx="9" cy="9.3" r="4.5" fill="none" stroke="#fff" stroke-width="1.6"/><rect x="8.2" y="5.5" width="1.6" height="4.5" fill="#fff"/></svg>
<div class="t" style="top:87.02px;font-size:11.5px;color:#858585;left:248px;letter-spacing:-0.483px;">Trước</div>
<div class="t" style="top:87.02px;font-size:11.5px;color:#858585;left:304px;letter-spacing:-0.820px;">Sau</div>
<div class="t" style="top:87.02px;font-size:11.5px;color:#858585;left:348.8px;letter-spacing:-0.423px;">Thêm</div>
<div class="t" style="top:87.02px;font-size:11.5px;color:#858585;left:393px;letter-spacing:-1.055px;">Sửa</div>
<div class="t" style="top:87.02px;font-size:11.5px;color:#000;left:428.9px;letter-spacing:-0.265px;">Cất</div>
<div class="t" style="top:87.02px;font-size:11.5px;color:#858585;left:463px;letter-spacing:-0.354px;">Xóa</div>
<div class="t" style="top:87.02px;font-size:11.5px;color:#000;left:499.7px;letter-spacing:-0.048px;">Hoãn</div>
<div class="t" style="top:87.02px;font-size:11.5px;color:#858585;left:550.5px;letter-spacing:0.135px;">Nạp</div>
<div class="t" style="top:87.02px;font-size:11.5px;color:#858585;left:589px;letter-spacing:0.029px;">Sinh bảng lương</div>
<div class="t" style="top:87.02px;font-size:11.5px;color:#858585;left:700px;letter-spacing:-0.295px;">In</div>
<div class="t" style="top:87.02px;font-size:11.5px;color:#000;left:732px;letter-spacing:0.125px;">Phản hồi</div>
<div class="t" style="top:87.02px;font-size:11.5px;color:#000;left:801px;letter-spacing:0.127px;">Giúp</div>
<div class="t" style="top:87.02px;font-size:11.5px;color:#000;left:842px;letter-spacing:0.277px;">Đóng</div>
<div class="t" style="top:118.79px;font-size:20.82px;font-weight:bold;left:252px;">Bảng chấm công theo giờ tháng 6 năm 2020</div>
<div class="a" style="left:239px;top:671px;width:882px;height:22px;background:#AFC9E7;"></div>
<div class="t" style="top:675.19px;font-size:11.0px;left:243px;">Mã nhân viên: Dì Huyền, Tên nhân viên: Doãn Thị Huyền</div>
<div class="a" style="left:1108px;top:689px;width:2px;height:2px;background:#6A8FC0;"></div>
<div class="a" style="left:1112px;top:689px;width:2px;height:2px;background:#6A8FC0;"></div>
<div class="a" style="left:1116px;top:689px;width:2px;height:2px;background:#6A8FC0;"></div>
<div class="a" style="left:1112px;top:685px;width:2px;height:2px;background:#6A8FC0;"></div>
<div class="a" style="left:1116px;top:685px;width:2px;height:2px;background:#6A8FC0;"></div>
<div class="a" style="left:1116px;top:681px;width:2px;height:2px;background:#6A8FC0;"></div>
<div class="a" style="left:247px;top:156px;width:867px;height:506px;background:#fff;border:1px solid #7FA3CF"></div>
<div class="a" style="left:248px;top:157px;width:865px;height:19px;background:#AFC9E7;"></div>
<div class="a" style="left:248px;top:176px;width:865px;height:1px;background:#7FA3CF;"></div>
<div class="a" style="left:522px;top:157px;width:1px;height:19px;background:#7FA3CF;"></div>
<div class="t" style="top:159.02px;font-size:11.5px;left:259px;">Thông tin nhân viên</div>
<div class="a" style="left:248px;top:177px;width:865px;height:19px;background:#AFC9E7;"></div>
<div class="a" style="left:248px;top:196px;width:865px;height:1px;background:#7FA3CF;"></div>
<div class="a" style="left:248px;top:177px;width:59px;height:19px;overflow:hidden">
<div class="t" style="top:2.02px;font-size:11.5px;left:-33px;">Mã nhân viên</div>
</div>
<div class="a" style="left:307px;top:177px;width:1px;height:19px;background:#7FA3CF;"></div>
<div class="a" style="left:522px;top:177px;width:1px;height:19px;background:#7FA3CF;"></div>
<div class="a" style="left:567px;top:177px;width:1px;height:19px;background:#7FA3CF;"></div>
<div class="a" style="left:522px;top:177px;width:1px;height:19px;background:#7FA3CF;"></div>
<div class="t" style="top:179.02px;font-size:11.5px;color:#000;left:525.0px;width:40px;text-align:center;">1</div>
<div class="a" style="left:567px;top:177px;width:1px;height:19px;background:#7FA3CF;"></div>
<div class="t" style="top:179.02px;font-size:11.5px;color:#000;left:570.0px;width:40px;text-align:center;">2</div>
<div class="a" style="left:612px;top:177px;width:1px;height:19px;background:#7FA3CF;"></div>
<div class="t" style="top:179.02px;font-size:11.5px;color:#000;left:615.0px;width:40px;text-align:center;">3</div>
<div class="a" style="left:657px;top:177px;width:1px;height:19px;background:#7FA3CF;"></div>
<div class="t" style="top:179.02px;font-size:11.5px;color:#000;left:660.0px;width:40px;text-align:center;">4</div>
<div class="a" style="left:702px;top:177px;width:1px;height:19px;background:#7FA3CF;"></div>
<div class="t" style="top:179.02px;font-size:11.5px;color:#000;left:705.0px;width:40px;text-align:center;">5</div>
<div class="a" style="left:747px;top:177px;width:1px;height:19px;background:#7FA3CF;"></div>
<div class="t" style="top:179.02px;font-size:11.5px;color:#F01818;left:750.0px;width:40px;text-align:center;">6</div>
<div class="a" style="left:792px;top:177px;width:1px;height:19px;background:#7FA3CF;"></div>
<div class="t" style="top:179.02px;font-size:11.5px;color:#F01818;left:795.0px;width:40px;text-align:center;">7</div>
<div class="a" style="left:837px;top:177px;width:1px;height:19px;background:#7FA3CF;"></div>
<div class="t" style="top:179.02px;font-size:11.5px;color:#000;left:840.0px;width:40px;text-align:center;">8</div>
<div class="a" style="left:882px;top:177px;width:1px;height:19px;background:#7FA3CF;"></div>
<div class="t" style="top:179.02px;font-size:11.5px;color:#000;left:885.0px;width:40px;text-align:center;">9</div>
<div class="a" style="left:927px;top:177px;width:1px;height:19px;background:#7FA3CF;"></div>
<div class="t" style="top:179.02px;font-size:11.5px;color:#000;left:930.0px;width:40px;text-align:center;">10</div>
<div class="a" style="left:972px;top:177px;width:1px;height:19px;background:#7FA3CF;"></div>
<div class="t" style="top:179.02px;font-size:11.5px;color:#000;left:975.0px;width:40px;text-align:center;">11</div>
<div class="a" style="left:1017px;top:177px;width:1px;height:19px;background:#7FA3CF;"></div>
<div class="t" style="top:179.02px;font-size:11.5px;color:#000;left:1020.0px;width:40px;text-align:center;">12</div>
<div class="a" style="left:1062px;top:177px;width:1px;height:19px;background:#7FA3CF;"></div>
<div class="t" style="top:179.02px;font-size:11.5px;color:#F01818;left:1065.0px;width:40px;text-align:center;">13</div>
<div class="a" style="left:1107px;top:177px;width:1px;height:19px;background:#7FA3CF;"></div>
<div class="a" style="left:248px;top:197px;width:14px;height:20px;background:#AFC9E7;"></div>
<svg class="a" style="left:250px;top:200px" width="12" height="12" viewBox="0 0 12 12"><rect x="0.6" y="0.6" width="10.8" height="10.8" fill="#BEDCF8" stroke="#1E1A5E" stroke-width="1.2"/><path d="M1.5 3H10.5L7 6.5V10.5H5V6.5Z" fill="#fff" stroke="#6A5AD8" stroke-width="0.8"/><path d="M1.2 10.8L10.8 1.2" stroke="#1E1A5E" stroke-width="1.3"/></svg>
<div class="a" style="left:263px;top:197px;width:349px;height:19px;background:#FFFDE0;"></div>
<div class="a" style="left:263px;top:216px;width:850px;height:1px;background:repeating-linear-gradient(90deg,#C8C090 0 1px,transparent 1px 2px);"></div>
<div class="a" style="left:307px;top:197px;width:1px;height:19px;background:repeating-linear-gradient(180deg,#A8A8A8 0 1px,transparent 1px 2px);"></div>
<div class="a" style="left:522px;top:197px;width:1px;height:19px;background:repeating-linear-gradient(180deg,#A8A8A8 0 1px,transparent 1px 2px);"></div>
<div class="a" style="left:567px;top:197px;width:1px;height:19px;background:repeating-linear-gradient(180deg,#A8A8A8 0 1px,transparent 1px 2px);"></div>
<div class="a" style="left:612px;top:197px;width:1px;height:19px;background:repeating-linear-gradient(180deg,#A8A8A8 0 1px,transparent 1px 2px);"></div>
<div class="a" style="left:657px;top:197px;width:1px;height:19px;background:repeating-linear-gradient(180deg,#A8A8A8 0 1px,transparent 1px 2px);"></div>
<div class="a" style="left:702px;top:197px;width:1px;height:19px;background:repeating-linear-gradient(180deg,#A8A8A8 0 1px,transparent 1px 2px);"></div>
<div class="a" style="left:747px;top:197px;width:1px;height:19px;background:repeating-linear-gradient(180deg,#A8A8A8 0 1px,transparent 1px 2px);"></div>
<div class="a" style="left:792px;top:197px;width:1px;height:19px;background:repeating-linear-gradient(180deg,#A8A8A8 0 1px,transparent 1px 2px);"></div>
<div class="a" style="left:837px;top:197px;width:1px;height:19px;background:repeating-linear-gradient(180deg,#A8A8A8 0 1px,transparent 1px 2px);"></div>
<div class="a" style="left:882px;top:197px;width:1px;height:19px;background:repeating-linear-gradient(180deg,#A8A8A8 0 1px,transparent 1px 2px);"></div>
<div class="a" style="left:927px;top:197px;width:1px;height:19px;background:repeating-linear-gradient(180deg,#A8A8A8 0 1px,transparent 1px 2px);"></div>
<div class="a" style="left:972px;top:197px;width:1px;height:19px;background:repeating-linear-gradient(180deg,#A8A8A8 0 1px,transparent 1px 2px);"></div>
<div class="a" style="left:1017px;top:197px;width:1px;height:19px;background:repeating-linear-gradient(180deg,#A8A8A8 0 1px,transparent 1px 2px);"></div>
<div class="a" style="left:1062px;top:197px;width:1px;height:19px;background:repeating-linear-gradient(180deg,#A8A8A8 0 1px,transparent 1px 2px);"></div>
<div class="a" style="left:1107px;top:197px;width:1px;height:19px;background:repeating-linear-gradient(180deg,#A8A8A8 0 1px,transparent 1px 2px);"></div>
<div class="a" style="left:248px;top:216px;width:865px;height:19px;background:#EFEFEF;"></div>
<div class="a" style="left:263px;top:235px;width:850px;height:1px;background:repeating-linear-gradient(90deg,#A8A8A8 0 1px,transparent 1px 2px);"></div>
<div class="a" style="left:251px;top:220px;width:9px;height:10px;background:#fff;"></div>
<div class="a" style="left:252px;top:224.5px;width:7px;height:1.5px;background:#000;"></div>
<div class="t" style="top:218.02px;font-size:11.5px;left:265px;">KD</div>
<div class="a" style="left:263px;top:255px;width:850px;height:1px;background:repeating-linear-gradient(90deg,#A8A8A8 0 1px,transparent 1px 2px);"></div>
<div class="a" style="left:263px;top:235px;width:1px;height:20px;background:repeating-linear-gradient(180deg,#A8A8A8 0 1px,transparent 1px 2px);"></div>
<div class="a" style="left:307px;top:235px;width:1px;height:20px;background:repeating-linear-gradient(180deg,#A8A8A8 0 1px,transparent 1px 2px);"></div>
<div class="a" style="left:522px;top:235px;width:1px;height:20px;background:repeating-linear-gradient(180deg,#A8A8A8 0 1px,transparent 1px 2px);"></div>
<div class="a" style="left:567px;top:235px;width:1px;height:20px;background:repeating-linear-gradient(180deg,#A8A8A8 0 1px,transparent 1px 2px);"></div>
<div class="a" style="left:612px;top:235px;width:1px;height:20px;background:repeating-linear-gradient(180deg,#A8A8A8 0 1px,transparent 1px 2px);"></div>
<div class="a" style="left:657px;top:235px;width:1px;height:20px;background:repeating-linear-gradient(180deg,#A8A8A8 0 1px,transparent 1px 2px);"></div>
<div class="a" style="left:702px;top:235px;width:1px;height:20px;background:repeating-linear-gradient(180deg,#A8A8A8 0 1px,transparent 1px 2px);"></div>
<div class="a" style="left:747px;top:235px;width:1px;height:20px;background:repeating-linear-gradient(180deg,#A8A8A8 0 1px,transparent 1px 2px);"></div>
<div class="a" style="left:792px;top:235px;width:1px;height:20px;background:repeating-linear-gradient(180deg,#A8A8A8 0 1px,transparent 1px 2px);"></div>
<div class="a" style="left:837px;top:235px;width:1px;height:20px;background:repeating-linear-gradient(180deg,#A8A8A8 0 1px,transparent 1px 2px);"></div>
<div class="a" style="left:882px;top:235px;width:1px;height:20px;background:repeating-linear-gradient(180deg,#A8A8A8 0 1px,transparent 1px 2px);"></div>
<div class="a" style="left:927px;top:235px;width:1px;height:20px;background:repeating-linear-gradient(180deg,#A8A8A8 0 1px,transparent 1px 2px);"></div>
<div class="a" style="left:972px;top:235px;width:1px;height:20px;background:repeating-linear-gradient(180deg,#A8A8A8 0 1px,transparent 1px 2px);"></div>
<div class="a" style="left:1017px;top:235px;width:1px;height:20px;background:repeating-linear-gradient(180deg,#A8A8A8 0 1px,transparent 1px 2px);"></div>
<div class="a" style="left:1062px;top:235px;width:1px;height:20px;background:repeating-linear-gradient(180deg,#A8A8A8 0 1px,transparent 1px 2px);"></div>
<div class="a" style="left:1107px;top:235px;width:1px;height:20px;background:repeating-linear-gradient(180deg,#A8A8A8 0 1px,transparent 1px 2px);"></div>
<div class="t" style="top:238.19px;font-size:11px;left:527px;">+:8</div>
<div class="t" style="top:238.19px;font-size:11px;left:572px;">+:8</div>
<div class="t" style="top:238.19px;font-size:11px;left:617px;">+:8</div>
<div class="t" style="top:238.19px;font-size:11px;left:662px;">+:8</div>
<div class="t" style="top:238.19px;font-size:11px;left:707px;">+:8</div>
<div class="t" style="top:238.19px;font-size:11px;left:752px;">+:8</div>
<div class="t" style="top:238.19px;font-size:11px;left:797px;">+:8</div>
<div class="t" style="top:238.19px;font-size:11px;left:842px;">+:8</div>
<div class="t" style="top:238.19px;font-size:11px;left:887px;">+:8</div>
<div class="t" style="top:238.19px;font-size:11px;left:932px;">+:8</div>
<div class="t" style="top:238.19px;font-size:11px;left:977px;">+:8</div>
<div class="t" style="top:238.19px;font-size:11px;left:1022px;">+:8</div>
<div class="t" style="top:238.19px;font-size:11px;left:1067px;">+:8</div>
<div class="a" style="left:1107px;top:244px;width:1.5px;height:1.5px;background:#E09040;"></div>
<div class="a" style="left:263px;top:275px;width:850px;height:1px;background:repeating-linear-gradient(90deg,#A8A8A8 0 1px,transparent 1px 2px);"></div>
<div class="a" style="left:263px;top:255px;width:1px;height:20px;background:repeating-linear-gradient(180deg,#A8A8A8 0 1px,transparent 1px 2px);"></div>
<div class="a" style="left:307px;top:255px;width:1px;height:20px;background:repeating-linear-gradient(180deg,#A8A8A8 0 1px,transparent 1px 2px);"></div>
<div class="a" style="left:522px;top:255px;width:1px;height:20px;background:repeating-linear-gradient(180deg,#A8A8A8 0 1px,transparent 1px 2px);"></div>
<div class="a" style="left:567px;top:255px;width:1px;height:20px;background:repeating-linear-gradient(180deg,#A8A8A8 0 1px,transparent 1px 2px);"></div>
<div class="a" style="left:612px;top:255px;width:1px;height:20px;background:repeating-linear-gradient(180deg,#A8A8A8 0 1px,transparent 1px 2px);"></div>
<div class="a" style="left:657px;top:255px;width:1px;height:20px;background:repeating-linear-gradient(180deg,#A8A8A8 0 1px,transparent 1px 2px);"></div>
<div class="a" style="left:702px;top:255px;width:1px;height:20px;background:repeating-linear-gradient(180deg,#A8A8A8 0 1px,transparent 1px 2px);"></div>
<div class="a" style="left:747px;top:255px;width:1px;height:20px;background:repeating-linear-gradient(180deg,#A8A8A8 0 1px,transparent 1px 2px);"></div>
<div class="a" style="left:792px;top:255px;width:1px;height:20px;background:repeating-linear-gradient(180deg,#A8A8A8 0 1px,transparent 1px 2px);"></div>
<div class="a" style="left:837px;top:255px;width:1px;height:20px;background:repeating-linear-gradient(180deg,#A8A8A8 0 1px,transparent 1px 2px);"></div>
<div class="a" style="left:882px;top:255px;width:1px;height:20px;background:repeating-linear-gradient(180deg,#A8A8A8 0 1px,transparent 1px 2px);"></div>
<div class="a" style="left:927px;top:255px;width:1px;height:20px;background:repeating-linear-gradient(180deg,#A8A8A8 0 1px,transparent 1px 2px);"></div>
<div class="a" style="left:972px;top:255px;width:1px;height:20px;background:repeating-linear-gradient(180deg,#A8A8A8 0 1px,transparent 1px 2px);"></div>
<div class="a" style="left:1017px;top:255px;width:1px;height:20px;background:repeating-linear-gradient(180deg,#A8A8A8 0 1px,transparent 1px 2px);"></div>
<div class="a" style="left:1062px;top:255px;width:1px;height:20px;background:repeating-linear-gradient(180deg,#A8A8A8 0 1px,transparent 1px 2px);"></div>
<div class="a" style="left:1107px;top:255px;width:1px;height:20px;background:repeating-linear-gradient(180deg,#A8A8A8 0 1px,transparent 1px 2px);"></div>
<div class="t" style="top:258.19px;font-size:11px;left:527px;">+:8</div>
<div class="t" style="top:258.19px;font-size:11px;left:572px;">+:8</div>
<div class="t" style="top:258.19px;font-size:11px;left:617px;">+:8</div>
<div class="t" style="top:258.19px;font-size:11px;left:662px;">+:8</div>
<div class="t" style="top:258.19px;font-size:11px;left:707px;">+:8</div>
<div class="t" style="top:258.19px;font-size:11px;left:752px;">+:8</div>
<div class="t" style="top:258.19px;font-size:11px;left:797px;">+:8</div>
<div class="t" style="top:258.19px;font-size:11px;left:842px;">+:8</div>
<div class="t" style="top:258.19px;font-size:11px;left:887px;">+:8</div>
<div class="t" style="top:258.19px;font-size:11px;left:932px;">+:8</div>
<div class="t" style="top:258.19px;font-size:11px;left:977px;">+:8</div>
<div class="t" style="top:258.19px;font-size:11px;left:1022px;">+:8</div>
<div class="t" style="top:258.19px;font-size:11px;left:1067px;">+:8</div>
<div class="a" style="left:1107px;top:264px;width:1.5px;height:1.5px;background:#E09040;"></div>
<div class="a" style="left:263px;top:295px;width:850px;height:1px;background:repeating-linear-gradient(90deg,#A8A8A8 0 1px,transparent 1px 2px);"></div>
<div class="a" style="left:263px;top:275px;width:1px;height:20px;background:repeating-linear-gradient(180deg,#A8A8A8 0 1px,transparent 1px 2px);"></div>
<div class="a" style="left:307px;top:275px;width:1px;height:20px;background:repeating-linear-gradient(180deg,#A8A8A8 0 1px,transparent 1px 2px);"></div>
<div class="a" style="left:522px;top:275px;width:1px;height:20px;background:repeating-linear-gradient(180deg,#A8A8A8 0 1px,transparent 1px 2px);"></div>
<div class="a" style="left:567px;top:275px;width:1px;height:20px;background:repeating-linear-gradient(180deg,#A8A8A8 0 1px,transparent 1px 2px);"></div>
<div class="a" style="left:612px;top:275px;width:1px;height:20px;background:repeating-linear-gradient(180deg,#A8A8A8 0 1px,transparent 1px 2px);"></div>
<div class="a" style="left:657px;top:275px;width:1px;height:20px;background:repeating-linear-gradient(180deg,#A8A8A8 0 1px,transparent 1px 2px);"></div>
<div class="a" style="left:702px;top:275px;width:1px;height:20px;background:repeating-linear-gradient(180deg,#A8A8A8 0 1px,transparent 1px 2px);"></div>
<div class="a" style="left:747px;top:275px;width:1px;height:20px;background:repeating-linear-gradient(180deg,#A8A8A8 0 1px,transparent 1px 2px);"></div>
<div class="a" style="left:792px;top:275px;width:1px;height:20px;background:repeating-linear-gradient(180deg,#A8A8A8 0 1px,transparent 1px 2px);"></div>
<div class="a" style="left:837px;top:275px;width:1px;height:20px;background:repeating-linear-gradient(180deg,#A8A8A8 0 1px,transparent 1px 2px);"></div>
<div class="a" style="left:882px;top:275px;width:1px;height:20px;background:repeating-linear-gradient(180deg,#A8A8A8 0 1px,transparent 1px 2px);"></div>
<div class="a" style="left:927px;top:275px;width:1px;height:20px;background:repeating-linear-gradient(180deg,#A8A8A8 0 1px,transparent 1px 2px);"></div>
<div class="a" style="left:972px;top:275px;width:1px;height:20px;background:repeating-linear-gradient(180deg,#A8A8A8 0 1px,transparent 1px 2px);"></div>
<div class="a" style="left:1017px;top:275px;width:1px;height:20px;background:repeating-linear-gradient(180deg,#A8A8A8 0 1px,transparent 1px 2px);"></div>
<div class="a" style="left:1062px;top:275px;width:1px;height:20px;background:repeating-linear-gradient(180deg,#A8A8A8 0 1px,transparent 1px 2px);"></div>
<div class="a" style="left:1107px;top:275px;width:1px;height:20px;background:repeating-linear-gradient(180deg,#A8A8A8 0 1px,transparent 1px 2px);"></div>
<div class="t" style="top:278.19px;font-size:11px;left:527px;">+:8</div>
<div class="t" style="top:278.19px;font-size:11px;left:572px;">+:8</div>
<div class="t" style="top:278.19px;font-size:11px;left:617px;">+:8</div>
<div class="t" style="top:278.19px;font-size:11px;left:662px;">+:8</div>
<div class="t" style="top:278.19px;font-size:11px;left:707px;">+:8</div>
<div class="t" style="top:278.19px;font-size:11px;left:752px;">+:8</div>
<div class="t" style="top:278.19px;font-size:11px;left:797px;">+:8</div>
<div class="t" style="top:278.19px;font-size:11px;left:842px;">+:8</div>
<div class="t" style="top:278.19px;font-size:11px;left:887px;">+:8</div>
<div class="t" style="top:278.19px;font-size:11px;left:932px;">+:8</div>
<div class="t" style="top:278.19px;font-size:11px;left:977px;">+:8</div>
<div class="t" style="top:278.19px;font-size:11px;left:1022px;">+:8</div>
<div class="t" style="top:278.19px;font-size:11px;left:1067px;">+:8</div>
<div class="a" style="left:1107px;top:284px;width:1.5px;height:1.5px;background:#E09040;"></div>
<div class="a" style="left:263px;top:315px;width:850px;height:1px;background:repeating-linear-gradient(90deg,#A8A8A8 0 1px,transparent 1px 2px);"></div>
<div class="a" style="left:263px;top:295px;width:1px;height:20px;background:repeating-linear-gradient(180deg,#A8A8A8 0 1px,transparent 1px 2px);"></div>
<div class="a" style="left:307px;top:295px;width:1px;height:20px;background:repeating-linear-gradient(180deg,#A8A8A8 0 1px,transparent 1px 2px);"></div>
<div class="a" style="left:522px;top:295px;width:1px;height:20px;background:repeating-linear-gradient(180deg,#A8A8A8 0 1px,transparent 1px 2px);"></div>
<div class="a" style="left:567px;top:295px;width:1px;height:20px;background:repeating-linear-gradient(180deg,#A8A8A8 0 1px,transparent 1px 2px);"></div>
<div class="a" style="left:612px;top:295px;width:1px;height:20px;background:repeating-linear-gradient(180deg,#A8A8A8 0 1px,transparent 1px 2px);"></div>
<div class="a" style="left:657px;top:295px;width:1px;height:20px;background:repeating-linear-gradient(180deg,#A8A8A8 0 1px,transparent 1px 2px);"></div>
<div class="a" style="left:702px;top:295px;width:1px;height:20px;background:repeating-linear-gradient(180deg,#A8A8A8 0 1px,transparent 1px 2px);"></div>
<div class="a" style="left:747px;top:295px;width:1px;height:20px;background:repeating-linear-gradient(180deg,#A8A8A8 0 1px,transparent 1px 2px);"></div>
<div class="a" style="left:792px;top:295px;width:1px;height:20px;background:repeating-linear-gradient(180deg,#A8A8A8 0 1px,transparent 1px 2px);"></div>
<div class="a" style="left:837px;top:295px;width:1px;height:20px;background:repeating-linear-gradient(180deg,#A8A8A8 0 1px,transparent 1px 2px);"></div>
<div class="a" style="left:882px;top:295px;width:1px;height:20px;background:repeating-linear-gradient(180deg,#A8A8A8 0 1px,transparent 1px 2px);"></div>
<div class="a" style="left:927px;top:295px;width:1px;height:20px;background:repeating-linear-gradient(180deg,#A8A8A8 0 1px,transparent 1px 2px);"></div>
<div class="a" style="left:972px;top:295px;width:1px;height:20px;background:repeating-linear-gradient(180deg,#A8A8A8 0 1px,transparent 1px 2px);"></div>
<div class="a" style="left:1017px;top:295px;width:1px;height:20px;background:repeating-linear-gradient(180deg,#A8A8A8 0 1px,transparent 1px 2px);"></div>
<div class="a" style="left:1062px;top:295px;width:1px;height:20px;background:repeating-linear-gradient(180deg,#A8A8A8 0 1px,transparent 1px 2px);"></div>
<div class="a" style="left:1107px;top:295px;width:1px;height:20px;background:repeating-linear-gradient(180deg,#A8A8A8 0 1px,transparent 1px 2px);"></div>
<div class="t" style="top:298.19px;font-size:11px;left:527px;">+:8</div>
<div class="t" style="top:298.19px;font-size:11px;left:572px;">+:8</div>
<div class="t" style="top:298.19px;font-size:11px;left:617px;">+:8</div>
<div class="t" style="top:298.19px;font-size:11px;left:662px;">+:8</div>
<div class="t" style="top:298.19px;font-size:11px;left:707px;">+:8</div>
<div class="t" style="top:298.19px;font-size:11px;left:752px;">+:8</div>
<div class="t" style="top:298.19px;font-size:11px;left:797px;">+:8</div>
<div class="t" style="top:298.19px;font-size:11px;left:842px;">+:8</div>
<div class="t" style="top:298.19px;font-size:11px;left:887px;">+:8</div>
<div class="t" style="top:298.19px;font-size:11px;left:932px;">+:8</div>
<div class="t" style="top:298.19px;font-size:11px;left:977px;">+:8</div>
<div class="t" style="top:298.19px;font-size:11px;left:1022px;">+:8</div>
<div class="t" style="top:298.19px;font-size:11px;left:1067px;">+:8</div>
<div class="a" style="left:1107px;top:304px;width:1.5px;height:1.5px;background:#E09040;"></div>
<div class="a" style="left:263px;top:316px;width:850px;height:16px;background:#fff;border:1px solid #B8CCE4;border-right:none"></div>
<div class="a" style="left:248px;top:332px;width:865px;height:19px;background:#EFEFEF;"></div>
<div class="a" style="left:263px;top:351px;width:850px;height:1px;background:repeating-linear-gradient(90deg,#A8A8A8 0 1px,transparent 1px 2px);"></div>
<div class="a" style="left:251px;top:336px;width:9px;height:10px;background:#fff;"></div>
<div class="a" style="left:252px;top:340.5px;width:7px;height:1.5px;background:#000;"></div>
<div class="t" style="top:334.02px;font-size:11.5px;left:265px;">SX</div>
<div class="a" style="left:263px;top:371px;width:850px;height:1px;background:repeating-linear-gradient(90deg,#A8A8A8 0 1px,transparent 1px 2px);"></div>
<div class="a" style="left:263px;top:351px;width:1px;height:20px;background:repeating-linear-gradient(180deg,#A8A8A8 0 1px,transparent 1px 2px);"></div>
<div class="a" style="left:307px;top:351px;width:1px;height:20px;background:repeating-linear-gradient(180deg,#A8A8A8 0 1px,transparent 1px 2px);"></div>
<div class="a" style="left:522px;top:351px;width:1px;height:20px;background:repeating-linear-gradient(180deg,#A8A8A8 0 1px,transparent 1px 2px);"></div>
<div class="a" style="left:567px;top:351px;width:1px;height:20px;background:repeating-linear-gradient(180deg,#A8A8A8 0 1px,transparent 1px 2px);"></div>
<div class="a" style="left:612px;top:351px;width:1px;height:20px;background:repeating-linear-gradient(180deg,#A8A8A8 0 1px,transparent 1px 2px);"></div>
<div class="a" style="left:657px;top:351px;width:1px;height:20px;background:repeating-linear-gradient(180deg,#A8A8A8 0 1px,transparent 1px 2px);"></div>
<div class="a" style="left:702px;top:351px;width:1px;height:20px;background:repeating-linear-gradient(180deg,#A8A8A8 0 1px,transparent 1px 2px);"></div>
<div class="a" style="left:747px;top:351px;width:1px;height:20px;background:repeating-linear-gradient(180deg,#A8A8A8 0 1px,transparent 1px 2px);"></div>
<div class="a" style="left:792px;top:351px;width:1px;height:20px;background:repeating-linear-gradient(180deg,#A8A8A8 0 1px,transparent 1px 2px);"></div>
<div class="a" style="left:837px;top:351px;width:1px;height:20px;background:repeating-linear-gradient(180deg,#A8A8A8 0 1px,transparent 1px 2px);"></div>
<div class="a" style="left:882px;top:351px;width:1px;height:20px;background:repeating-linear-gradient(180deg,#A8A8A8 0 1px,transparent 1px 2px);"></div>
<div class="a" style="left:927px;top:351px;width:1px;height:20px;background:repeating-linear-gradient(180deg,#A8A8A8 0 1px,transparent 1px 2px);"></div>
<div class="a" style="left:972px;top:351px;width:1px;height:20px;background:repeating-linear-gradient(180deg,#A8A8A8 0 1px,transparent 1px 2px);"></div>
<div class="a" style="left:1017px;top:351px;width:1px;height:20px;background:repeating-linear-gradient(180deg,#A8A8A8 0 1px,transparent 1px 2px);"></div>
<div class="a" style="left:1062px;top:351px;width:1px;height:20px;background:repeating-linear-gradient(180deg,#A8A8A8 0 1px,transparent 1px 2px);"></div>
<div class="a" style="left:1107px;top:351px;width:1px;height:20px;background:repeating-linear-gradient(180deg,#A8A8A8 0 1px,transparent 1px 2px);"></div>
<div class="t" style="top:354.19px;font-size:11px;left:527px;">+:8</div>
<div class="t" style="top:354.19px;font-size:11px;left:572px;">+:8</div>
<div class="t" style="top:354.19px;font-size:11px;left:617px;">+:8</div>
<div class="t" style="top:354.19px;font-size:11px;left:662px;">+:8</div>
<div class="t" style="top:354.19px;font-size:11px;left:707px;">+:8</div>
<div class="t" style="top:354.19px;font-size:11px;left:752px;">+:8</div>
<div class="t" style="top:354.19px;font-size:11px;left:797px;">+:8</div>
<div class="t" style="top:354.19px;font-size:11px;left:842px;">+:8</div>
<div class="t" style="top:354.19px;font-size:11px;left:887px;">+:8</div>
<div class="t" style="top:354.19px;font-size:11px;left:932px;">+:8</div>
<div class="t" style="top:354.19px;font-size:11px;left:977px;">+:8</div>
<div class="t" style="top:354.19px;font-size:11px;left:1022px;">+:8</div>
<div class="t" style="top:354.19px;font-size:11px;left:1067px;">+:8</div>
<div class="a" style="left:1107px;top:360px;width:1.5px;height:1.5px;background:#E09040;"></div>
<div class="a" style="left:263px;top:391px;width:850px;height:1px;background:repeating-linear-gradient(90deg,#A8A8A8 0 1px,transparent 1px 2px);"></div>
<div class="a" style="left:263px;top:371px;width:1px;height:20px;background:repeating-linear-gradient(180deg,#A8A8A8 0 1px,transparent 1px 2px);"></div>
<div class="a" style="left:307px;top:371px;width:1px;height:20px;background:repeating-linear-gradient(180deg,#A8A8A8 0 1px,transparent 1px 2px);"></div>
<div class="a" style="left:522px;top:371px;width:1px;height:20px;background:repeating-linear-gradient(180deg,#A8A8A8 0 1px,transparent 1px 2px);"></div>
<div class="a" style="left:567px;top:371px;width:1px;height:20px;background:repeating-linear-gradient(180deg,#A8A8A8 0 1px,transparent 1px 2px);"></div>
<div class="a" style="left:612px;top:371px;width:1px;height:20px;background:repeating-linear-gradient(180deg,#A8A8A8 0 1px,transparent 1px 2px);"></div>
<div class="a" style="left:657px;top:371px;width:1px;height:20px;background:repeating-linear-gradient(180deg,#A8A8A8 0 1px,transparent 1px 2px);"></div>
<div class="a" style="left:702px;top:371px;width:1px;height:20px;background:repeating-linear-gradient(180deg,#A8A8A8 0 1px,transparent 1px 2px);"></div>
<div class="a" style="left:747px;top:371px;width:1px;height:20px;background:repeating-linear-gradient(180deg,#A8A8A8 0 1px,transparent 1px 2px);"></div>
<div class="a" style="left:792px;top:371px;width:1px;height:20px;background:repeating-linear-gradient(180deg,#A8A8A8 0 1px,transparent 1px 2px);"></div>
<div class="a" style="left:837px;top:371px;width:1px;height:20px;background:repeating-linear-gradient(180deg,#A8A8A8 0 1px,transparent 1px 2px);"></div>
<div class="a" style="left:882px;top:371px;width:1px;height:20px;background:repeating-linear-gradient(180deg,#A8A8A8 0 1px,transparent 1px 2px);"></div>
<div class="a" style="left:927px;top:371px;width:1px;height:20px;background:repeating-linear-gradient(180deg,#A8A8A8 0 1px,transparent 1px 2px);"></div>
<div class="a" style="left:972px;top:371px;width:1px;height:20px;background:repeating-linear-gradient(180deg,#A8A8A8 0 1px,transparent 1px 2px);"></div>
<div class="a" style="left:1017px;top:371px;width:1px;height:20px;background:repeating-linear-gradient(180deg,#A8A8A8 0 1px,transparent 1px 2px);"></div>
<div class="a" style="left:1062px;top:371px;width:1px;height:20px;background:repeating-linear-gradient(180deg,#A8A8A8 0 1px,transparent 1px 2px);"></div>
<div class="a" style="left:1107px;top:371px;width:1px;height:20px;background:repeating-linear-gradient(180deg,#A8A8A8 0 1px,transparent 1px 2px);"></div>
<div class="t" style="top:374.19px;font-size:11px;left:527px;">+:8</div>
<div class="t" style="top:374.19px;font-size:11px;left:572px;">+:8</div>
<div class="t" style="top:374.19px;font-size:11px;left:617px;">+:8</div>
<div class="t" style="top:374.19px;font-size:11px;left:662px;">+:8</div>
<div class="t" style="top:374.19px;font-size:11px;left:707px;">+:8</div>
<div class="t" style="top:374.19px;font-size:11px;left:752px;">+:8</div>
<div class="t" style="top:374.19px;font-size:11px;left:797px;">+:8</div>
<div class="t" style="top:374.19px;font-size:11px;left:842px;">+:8</div>
<div class="t" style="top:374.19px;font-size:11px;left:887px;">+:8</div>
<div class="t" style="top:374.19px;font-size:11px;left:932px;">+:8</div>
<div class="t" style="top:374.19px;font-size:11px;left:977px;">+:8</div>
<div class="t" style="top:374.19px;font-size:11px;left:1022px;">+:8</div>
<div class="t" style="top:374.19px;font-size:11px;left:1067px;">+:8</div>
<div class="a" style="left:1107px;top:380px;width:1.5px;height:1.5px;background:#E09040;"></div>
<div class="a" style="left:263px;top:411px;width:850px;height:1px;background:repeating-linear-gradient(90deg,#A8A8A8 0 1px,transparent 1px 2px);"></div>
<div class="a" style="left:263px;top:391px;width:1px;height:20px;background:repeating-linear-gradient(180deg,#A8A8A8 0 1px,transparent 1px 2px);"></div>
<div class="a" style="left:307px;top:391px;width:1px;height:20px;background:repeating-linear-gradient(180deg,#A8A8A8 0 1px,transparent 1px 2px);"></div>
<div class="a" style="left:522px;top:391px;width:1px;height:20px;background:repeating-linear-gradient(180deg,#A8A8A8 0 1px,transparent 1px 2px);"></div>
<div class="a" style="left:567px;top:391px;width:1px;height:20px;background:repeating-linear-gradient(180deg,#A8A8A8 0 1px,transparent 1px 2px);"></div>
<div class="a" style="left:612px;top:391px;width:1px;height:20px;background:repeating-linear-gradient(180deg,#A8A8A8 0 1px,transparent 1px 2px);"></div>
<div class="a" style="left:657px;top:391px;width:1px;height:20px;background:repeating-linear-gradient(180deg,#A8A8A8 0 1px,transparent 1px 2px);"></div>
<div class="a" style="left:702px;top:391px;width:1px;height:20px;background:repeating-linear-gradient(180deg,#A8A8A8 0 1px,transparent 1px 2px);"></div>
<div class="a" style="left:747px;top:391px;width:1px;height:20px;background:repeating-linear-gradient(180deg,#A8A8A8 0 1px,transparent 1px 2px);"></div>
<div class="a" style="left:792px;top:391px;width:1px;height:20px;background:repeating-linear-gradient(180deg,#A8A8A8 0 1px,transparent 1px 2px);"></div>
<div class="a" style="left:837px;top:391px;width:1px;height:20px;background:repeating-linear-gradient(180deg,#A8A8A8 0 1px,transparent 1px 2px);"></div>
<div class="a" style="left:882px;top:391px;width:1px;height:20px;background:repeating-linear-gradient(180deg,#A8A8A8 0 1px,transparent 1px 2px);"></div>
<div class="a" style="left:927px;top:391px;width:1px;height:20px;background:repeating-linear-gradient(180deg,#A8A8A8 0 1px,transparent 1px 2px);"></div>
<div class="a" style="left:972px;top:391px;width:1px;height:20px;background:repeating-linear-gradient(180deg,#A8A8A8 0 1px,transparent 1px 2px);"></div>
<div class="a" style="left:1017px;top:391px;width:1px;height:20px;background:repeating-linear-gradient(180deg,#A8A8A8 0 1px,transparent 1px 2px);"></div>
<div class="a" style="left:1062px;top:391px;width:1px;height:20px;background:repeating-linear-gradient(180deg,#A8A8A8 0 1px,transparent 1px 2px);"></div>
<div class="a" style="left:1107px;top:391px;width:1px;height:20px;background:repeating-linear-gradient(180deg,#A8A8A8 0 1px,transparent 1px 2px);"></div>
<div class="t" style="top:394.19px;font-size:11px;left:527px;">+:8</div>
<div class="t" style="top:394.19px;font-size:11px;left:572px;">+:8</div>
<div class="t" style="top:394.19px;font-size:11px;left:617px;">+:8</div>
<div class="t" style="top:394.19px;font-size:11px;left:662px;">+:8</div>
<div class="t" style="top:394.19px;font-size:11px;left:707px;">+:8</div>
<div class="t" style="top:394.19px;font-size:11px;left:752px;">+:8</div>
<div class="t" style="top:394.19px;font-size:11px;left:797px;">+:8</div>
<div class="t" style="top:394.19px;font-size:11px;left:842px;">+:8</div>
<div class="t" style="top:394.19px;font-size:11px;left:887px;">+:8</div>
<div class="t" style="top:394.19px;font-size:11px;left:932px;">+:8</div>
<div class="t" style="top:394.19px;font-size:11px;left:977px;">+:8</div>
<div class="t" style="top:394.19px;font-size:11px;left:1022px;">+:8</div>
<div class="t" style="top:394.19px;font-size:11px;left:1067px;">+:8</div>
<div class="a" style="left:1107px;top:400px;width:1.5px;height:1.5px;background:#E09040;"></div>
<div class="a" style="left:263px;top:431px;width:850px;height:1px;background:repeating-linear-gradient(90deg,#A8A8A8 0 1px,transparent 1px 2px);"></div>
<div class="a" style="left:263px;top:411px;width:1px;height:20px;background:repeating-linear-gradient(180deg,#A8A8A8 0 1px,transparent 1px 2px);"></div>
<div class="a" style="left:307px;top:411px;width:1px;height:20px;background:repeating-linear-gradient(180deg,#A8A8A8 0 1px,transparent 1px 2px);"></div>
<div class="a" style="left:522px;top:411px;width:1px;height:20px;background:repeating-linear-gradient(180deg,#A8A8A8 0 1px,transparent 1px 2px);"></div>
<div class="a" style="left:567px;top:411px;width:1px;height:20px;background:repeating-linear-gradient(180deg,#A8A8A8 0 1px,transparent 1px 2px);"></div>
<div class="a" style="left:612px;top:411px;width:1px;height:20px;background:repeating-linear-gradient(180deg,#A8A8A8 0 1px,transparent 1px 2px);"></div>
<div class="a" style="left:657px;top:411px;width:1px;height:20px;background:repeating-linear-gradient(180deg,#A8A8A8 0 1px,transparent 1px 2px);"></div>
<div class="a" style="left:702px;top:411px;width:1px;height:20px;background:repeating-linear-gradient(180deg,#A8A8A8 0 1px,transparent 1px 2px);"></div>
<div class="a" style="left:747px;top:411px;width:1px;height:20px;background:repeating-linear-gradient(180deg,#A8A8A8 0 1px,transparent 1px 2px);"></div>
<div class="a" style="left:792px;top:411px;width:1px;height:20px;background:repeating-linear-gradient(180deg,#A8A8A8 0 1px,transparent 1px 2px);"></div>
<div class="a" style="left:837px;top:411px;width:1px;height:20px;background:repeating-linear-gradient(180deg,#A8A8A8 0 1px,transparent 1px 2px);"></div>
<div class="a" style="left:882px;top:411px;width:1px;height:20px;background:repeating-linear-gradient(180deg,#A8A8A8 0 1px,transparent 1px 2px);"></div>
<div class="a" style="left:927px;top:411px;width:1px;height:20px;background:repeating-linear-gradient(180deg,#A8A8A8 0 1px,transparent 1px 2px);"></div>
<div class="a" style="left:972px;top:411px;width:1px;height:20px;background:repeating-linear-gradient(180deg,#A8A8A8 0 1px,transparent 1px 2px);"></div>
<div class="a" style="left:1017px;top:411px;width:1px;height:20px;background:repeating-linear-gradient(180deg,#A8A8A8 0 1px,transparent 1px 2px);"></div>
<div class="a" style="left:1062px;top:411px;width:1px;height:20px;background:repeating-linear-gradient(180deg,#A8A8A8 0 1px,transparent 1px 2px);"></div>
<div class="a" style="left:1107px;top:411px;width:1px;height:20px;background:repeating-linear-gradient(180deg,#A8A8A8 0 1px,transparent 1px 2px);"></div>
<div class="t" style="top:414.19px;font-size:11px;left:527px;">+:8</div>
<div class="t" style="top:414.19px;font-size:11px;left:572px;">+:8</div>
<div class="t" style="top:414.19px;font-size:11px;left:617px;">+:8</div>
<div class="t" style="top:414.19px;font-size:11px;left:662px;">+:8</div>
<div class="t" style="top:414.19px;font-size:11px;left:707px;">+:8</div>
<div class="t" style="top:414.19px;font-size:11px;left:752px;">+:8</div>
<div class="t" style="top:414.19px;font-size:11px;left:797px;">+:8</div>
<div class="t" style="top:414.19px;font-size:11px;left:842px;">+:8</div>
<div class="t" style="top:414.19px;font-size:11px;left:887px;">+:8</div>
<div class="t" style="top:414.19px;font-size:11px;left:932px;">+:8</div>
<div class="t" style="top:414.19px;font-size:11px;left:977px;">+:8</div>
<div class="t" style="top:414.19px;font-size:11px;left:1022px;">+:8</div>
<div class="t" style="top:414.19px;font-size:11px;left:1067px;">+:8</div>
<div class="a" style="left:1107px;top:420px;width:1.5px;height:1.5px;background:#E09040;"></div>
<div class="a" style="left:263px;top:451px;width:850px;height:1px;background:repeating-linear-gradient(90deg,#A8A8A8 0 1px,transparent 1px 2px);"></div>
<div class="a" style="left:263px;top:431px;width:1px;height:20px;background:repeating-linear-gradient(180deg,#A8A8A8 0 1px,transparent 1px 2px);"></div>
<div class="a" style="left:307px;top:431px;width:1px;height:20px;background:repeating-linear-gradient(180deg,#A8A8A8 0 1px,transparent 1px 2px);"></div>
<div class="a" style="left:522px;top:431px;width:1px;height:20px;background:repeating-linear-gradient(180deg,#A8A8A8 0 1px,transparent 1px 2px);"></div>
<div class="a" style="left:567px;top:431px;width:1px;height:20px;background:repeating-linear-gradient(180deg,#A8A8A8 0 1px,transparent 1px 2px);"></div>
<div class="a" style="left:612px;top:431px;width:1px;height:20px;background:repeating-linear-gradient(180deg,#A8A8A8 0 1px,transparent 1px 2px);"></div>
<div class="a" style="left:657px;top:431px;width:1px;height:20px;background:repeating-linear-gradient(180deg,#A8A8A8 0 1px,transparent 1px 2px);"></div>
<div class="a" style="left:702px;top:431px;width:1px;height:20px;background:repeating-linear-gradient(180deg,#A8A8A8 0 1px,transparent 1px 2px);"></div>
<div class="a" style="left:747px;top:431px;width:1px;height:20px;background:repeating-linear-gradient(180deg,#A8A8A8 0 1px,transparent 1px 2px);"></div>
<div class="a" style="left:792px;top:431px;width:1px;height:20px;background:repeating-linear-gradient(180deg,#A8A8A8 0 1px,transparent 1px 2px);"></div>
<div class="a" style="left:837px;top:431px;width:1px;height:20px;background:repeating-linear-gradient(180deg,#A8A8A8 0 1px,transparent 1px 2px);"></div>
<div class="a" style="left:882px;top:431px;width:1px;height:20px;background:repeating-linear-gradient(180deg,#A8A8A8 0 1px,transparent 1px 2px);"></div>
<div class="a" style="left:927px;top:431px;width:1px;height:20px;background:repeating-linear-gradient(180deg,#A8A8A8 0 1px,transparent 1px 2px);"></div>
<div class="a" style="left:972px;top:431px;width:1px;height:20px;background:repeating-linear-gradient(180deg,#A8A8A8 0 1px,transparent 1px 2px);"></div>
<div class="a" style="left:1017px;top:431px;width:1px;height:20px;background:repeating-linear-gradient(180deg,#A8A8A8 0 1px,transparent 1px 2px);"></div>
<div class="a" style="left:1062px;top:431px;width:1px;height:20px;background:repeating-linear-gradient(180deg,#A8A8A8 0 1px,transparent 1px 2px);"></div>
<div class="a" style="left:1107px;top:431px;width:1px;height:20px;background:repeating-linear-gradient(180deg,#A8A8A8 0 1px,transparent 1px 2px);"></div>
<div class="t" style="top:434.19px;font-size:11px;left:527px;">+:8</div>
<div class="t" style="top:434.19px;font-size:11px;left:572px;">+:8</div>
<div class="t" style="top:434.19px;font-size:11px;left:617px;">+:8</div>
<div class="t" style="top:434.19px;font-size:11px;left:662px;">+:8</div>
<div class="t" style="top:434.19px;font-size:11px;left:707px;">+:8</div>
<div class="t" style="top:434.19px;font-size:11px;left:752px;">+:8</div>
<div class="t" style="top:434.19px;font-size:11px;left:797px;">+:8</div>
<div class="t" style="top:434.19px;font-size:11px;left:842px;">+:8</div>
<div class="t" style="top:434.19px;font-size:11px;left:887px;">+:8</div>
<div class="t" style="top:434.19px;font-size:11px;left:932px;">+:8</div>
<div class="t" style="top:434.19px;font-size:11px;left:977px;">+:8</div>
<div class="t" style="top:434.19px;font-size:11px;left:1022px;">+:8</div>
<div class="t" style="top:434.19px;font-size:11px;left:1067px;">+:8</div>
<div class="a" style="left:1107px;top:440px;width:1.5px;height:1.5px;background:#E09040;"></div>
<div class="a" style="left:263px;top:452px;width:850px;height:17px;background:#fff;border:1px solid #B8CCE4;border-right:none"></div>
<div class="a" style="left:248px;top:469px;width:865px;height:19px;background:#EFEFEF;"></div>
<div class="a" style="left:263px;top:488px;width:850px;height:1px;background:repeating-linear-gradient(90deg,#A8A8A8 0 1px,transparent 1px 2px);"></div>
<div class="a" style="left:251px;top:473px;width:9px;height:10px;background:#fff;"></div>
<div class="a" style="left:252px;top:477.5px;width:7px;height:1.5px;background:#000;"></div>
<div class="t" style="top:471.02px;font-size:11.5px;left:265px;">VP</div>
<div class="a" style="left:263px;top:487px;width:850px;height:20px;background:#FFF2CC;"></div>
<div class="a" style="left:263px;top:507px;width:850px;height:1px;background:repeating-linear-gradient(90deg,#A8A8A8 0 1px,transparent 1px 2px);"></div>
<div class="a" style="left:263px;top:487px;width:1px;height:20px;background:repeating-linear-gradient(180deg,#A8A8A8 0 1px,transparent 1px 2px);"></div>
<div class="a" style="left:307px;top:487px;width:1px;height:20px;background:repeating-linear-gradient(180deg,#A8A8A8 0 1px,transparent 1px 2px);"></div>
<div class="a" style="left:522px;top:487px;width:1px;height:20px;background:repeating-linear-gradient(180deg,#A8A8A8 0 1px,transparent 1px 2px);"></div>
<div class="a" style="left:567px;top:487px;width:1px;height:20px;background:repeating-linear-gradient(180deg,#A8A8A8 0 1px,transparent 1px 2px);"></div>
<div class="a" style="left:612px;top:487px;width:1px;height:20px;background:repeating-linear-gradient(180deg,#A8A8A8 0 1px,transparent 1px 2px);"></div>
<div class="a" style="left:657px;top:487px;width:1px;height:20px;background:repeating-linear-gradient(180deg,#A8A8A8 0 1px,transparent 1px 2px);"></div>
<div class="a" style="left:702px;top:487px;width:1px;height:20px;background:repeating-linear-gradient(180deg,#A8A8A8 0 1px,transparent 1px 2px);"></div>
<div class="a" style="left:747px;top:487px;width:1px;height:20px;background:repeating-linear-gradient(180deg,#A8A8A8 0 1px,transparent 1px 2px);"></div>
<div class="a" style="left:792px;top:487px;width:1px;height:20px;background:repeating-linear-gradient(180deg,#A8A8A8 0 1px,transparent 1px 2px);"></div>
<div class="a" style="left:837px;top:487px;width:1px;height:20px;background:repeating-linear-gradient(180deg,#A8A8A8 0 1px,transparent 1px 2px);"></div>
<div class="a" style="left:882px;top:487px;width:1px;height:20px;background:repeating-linear-gradient(180deg,#A8A8A8 0 1px,transparent 1px 2px);"></div>
<div class="a" style="left:927px;top:487px;width:1px;height:20px;background:repeating-linear-gradient(180deg,#A8A8A8 0 1px,transparent 1px 2px);"></div>
<div class="a" style="left:972px;top:487px;width:1px;height:20px;background:repeating-linear-gradient(180deg,#A8A8A8 0 1px,transparent 1px 2px);"></div>
<div class="a" style="left:1017px;top:487px;width:1px;height:20px;background:repeating-linear-gradient(180deg,#A8A8A8 0 1px,transparent 1px 2px);"></div>
<div class="a" style="left:1062px;top:487px;width:1px;height:20px;background:repeating-linear-gradient(180deg,#A8A8A8 0 1px,transparent 1px 2px);"></div>
<div class="a" style="left:1107px;top:487px;width:1px;height:20px;background:repeating-linear-gradient(180deg,#A8A8A8 0 1px,transparent 1px 2px);"></div>
<div class="t" style="top:490.19px;font-size:11px;left:312px;">Doãn Thị Huyền</div>
<div class="t" style="top:490.19px;font-size:11px;left:527px;">+:8</div>
<div class="a" style="left:567px;top:487px;width:46px;height:21px;background:#fff;border:1px solid #B8B8B8;border-top:none"></div>
<div class="a" style="left:595px;top:487px;width:17px;height:20px;background:#AFC9E7;"></div>
<svg class="a" style="left:599px;top:495px" width="8" height="5" viewBox="0 0 8 5"><path d="M0 0H8L4 4.5Z" fill="#000"/></svg>
<div class="t" style="top:490.19px;font-size:11px;left:572px;">+:8</div>
<div class="t" style="top:490.19px;font-size:11px;left:617px;">+:8</div>
<div class="t" style="top:490.19px;font-size:11px;left:662px;">+:8</div>
<div class="t" style="top:490.19px;font-size:11px;left:707px;">+:8</div>
<div class="t" style="top:490.19px;font-size:11px;left:752px;">+:8</div>
<div class="t" style="top:490.19px;font-size:11px;left:797px;">+:8</div>
<div class="t" style="top:490.19px;font-size:11px;left:842px;">+:8</div>
<div class="t" style="top:490.19px;font-size:11px;left:887px;">+:8</div>
<div class="t" style="top:490.19px;font-size:11px;left:932px;">+:8</div>
<div class="t" style="top:490.19px;font-size:11px;left:977px;">+:8</div>
<div class="t" style="top:490.19px;font-size:11px;left:1022px;">+:8</div>
<div class="t" style="top:490.19px;font-size:11px;left:1067px;">+:8</div>
<div class="a" style="left:1107px;top:496px;width:1.5px;height:1.5px;background:#E09040;"></div>
<div class="a" style="left:263px;top:527px;width:850px;height:1px;background:repeating-linear-gradient(90deg,#A8A8A8 0 1px,transparent 1px 2px);"></div>
<div class="a" style="left:263px;top:507px;width:1px;height:20px;background:repeating-linear-gradient(180deg,#A8A8A8 0 1px,transparent 1px 2px);"></div>
<div class="a" style="left:307px;top:507px;width:1px;height:20px;background:repeating-linear-gradient(180deg,#A8A8A8 0 1px,transparent 1px 2px);"></div>
<div class="a" style="left:522px;top:507px;width:1px;height:20px;background:repeating-linear-gradient(180deg,#A8A8A8 0 1px,transparent 1px 2px);"></div>
<div class="a" style="left:567px;top:507px;width:1px;height:20px;background:repeating-linear-gradient(180deg,#A8A8A8 0 1px,transparent 1px 2px);"></div>
<div class="a" style="left:612px;top:507px;width:1px;height:20px;background:repeating-linear-gradient(180deg,#A8A8A8 0 1px,transparent 1px 2px);"></div>
<div class="a" style="left:657px;top:507px;width:1px;height:20px;background:repeating-linear-gradient(180deg,#A8A8A8 0 1px,transparent 1px 2px);"></div>
<div class="a" style="left:702px;top:507px;width:1px;height:20px;background:repeating-linear-gradient(180deg,#A8A8A8 0 1px,transparent 1px 2px);"></div>
<div class="a" style="left:747px;top:507px;width:1px;height:20px;background:repeating-linear-gradient(180deg,#A8A8A8 0 1px,transparent 1px 2px);"></div>
<div class="a" style="left:792px;top:507px;width:1px;height:20px;background:repeating-linear-gradient(180deg,#A8A8A8 0 1px,transparent 1px 2px);"></div>
<div class="a" style="left:837px;top:507px;width:1px;height:20px;background:repeating-linear-gradient(180deg,#A8A8A8 0 1px,transparent 1px 2px);"></div>
<div class="a" style="left:882px;top:507px;width:1px;height:20px;background:repeating-linear-gradient(180deg,#A8A8A8 0 1px,transparent 1px 2px);"></div>
<div class="a" style="left:927px;top:507px;width:1px;height:20px;background:repeating-linear-gradient(180deg,#A8A8A8 0 1px,transparent 1px 2px);"></div>
<div class="a" style="left:972px;top:507px;width:1px;height:20px;background:repeating-linear-gradient(180deg,#A8A8A8 0 1px,transparent 1px 2px);"></div>
<div class="a" style="left:1017px;top:507px;width:1px;height:20px;background:repeating-linear-gradient(180deg,#A8A8A8 0 1px,transparent 1px 2px);"></div>
<div class="a" style="left:1062px;top:507px;width:1px;height:20px;background:repeating-linear-gradient(180deg,#A8A8A8 0 1px,transparent 1px 2px);"></div>
<div class="a" style="left:1107px;top:507px;width:1px;height:20px;background:repeating-linear-gradient(180deg,#A8A8A8 0 1px,transparent 1px 2px);"></div>
<div class="t" style="top:510.19px;font-size:11px;left:312px;">Trần Thị Kim Ngân</div>
<div class="t" style="top:510.19px;font-size:11px;left:527px;">+:8</div>
<div class="t" style="top:510.19px;font-size:11px;left:572px;">+:8</div>
<div class="t" style="top:510.19px;font-size:11px;left:617px;">+:8</div>
<div class="t" style="top:510.19px;font-size:11px;left:662px;">+:8</div>
<div class="t" style="top:510.19px;font-size:11px;left:707px;">+:8</div>
<div class="t" style="top:510.19px;font-size:11px;left:752px;">+:8</div>
<div class="t" style="top:510.19px;font-size:11px;left:797px;">+:8</div>
<div class="t" style="top:510.19px;font-size:11px;left:842px;">+:8</div>
<div class="t" style="top:510.19px;font-size:11px;left:887px;">+:8</div>
<div class="t" style="top:510.19px;font-size:11px;left:932px;">+:8</div>
<div class="t" style="top:510.19px;font-size:11px;left:977px;">+:8</div>
<div class="t" style="top:510.19px;font-size:11px;left:1022px;">+:8</div>
<div class="t" style="top:510.19px;font-size:11px;left:1067px;">+:8</div>
<div class="a" style="left:1107px;top:516px;width:1.5px;height:1.5px;background:#E09040;"></div>
<div class="a" style="left:263px;top:528px;width:850px;height:17px;background:#fff;border:1px solid #B8CCE4;border-right:none"></div>
<div class="a" style="left:248px;top:545px;width:865px;height:1px;background:repeating-linear-gradient(90deg,#A8A8A8 0 1px,transparent 1px 2px);"></div>
<div class="a" style="left:248px;top:565px;width:865px;height:1px;background:repeating-linear-gradient(90deg,#A8A8A8 0 1px,transparent 1px 2px);"></div>
<div class="a" style="left:307px;top:545px;width:1px;height:20px;background:repeating-linear-gradient(180deg,#A8A8A8 0 1px,transparent 1px 2px);"></div>
<div class="a" style="left:522px;top:545px;width:1px;height:20px;background:repeating-linear-gradient(180deg,#A8A8A8 0 1px,transparent 1px 2px);"></div>
<div class="a" style="left:567px;top:545px;width:1px;height:20px;background:repeating-linear-gradient(180deg,#A8A8A8 0 1px,transparent 1px 2px);"></div>
<div class="a" style="left:612px;top:545px;width:1px;height:20px;background:repeating-linear-gradient(180deg,#A8A8A8 0 1px,transparent 1px 2px);"></div>
<div class="a" style="left:657px;top:545px;width:1px;height:20px;background:repeating-linear-gradient(180deg,#A8A8A8 0 1px,transparent 1px 2px);"></div>
<div class="a" style="left:702px;top:545px;width:1px;height:20px;background:repeating-linear-gradient(180deg,#A8A8A8 0 1px,transparent 1px 2px);"></div>
<div class="a" style="left:747px;top:545px;width:1px;height:20px;background:repeating-linear-gradient(180deg,#A8A8A8 0 1px,transparent 1px 2px);"></div>
<div class="a" style="left:792px;top:545px;width:1px;height:20px;background:repeating-linear-gradient(180deg,#A8A8A8 0 1px,transparent 1px 2px);"></div>
<div class="a" style="left:837px;top:545px;width:1px;height:20px;background:repeating-linear-gradient(180deg,#A8A8A8 0 1px,transparent 1px 2px);"></div>
<div class="a" style="left:882px;top:545px;width:1px;height:20px;background:repeating-linear-gradient(180deg,#A8A8A8 0 1px,transparent 1px 2px);"></div>
<div class="a" style="left:927px;top:545px;width:1px;height:20px;background:repeating-linear-gradient(180deg,#A8A8A8 0 1px,transparent 1px 2px);"></div>
<div class="a" style="left:972px;top:545px;width:1px;height:20px;background:repeating-linear-gradient(180deg,#A8A8A8 0 1px,transparent 1px 2px);"></div>
<div class="a" style="left:1017px;top:545px;width:1px;height:20px;background:repeating-linear-gradient(180deg,#A8A8A8 0 1px,transparent 1px 2px);"></div>
<div class="a" style="left:1062px;top:545px;width:1px;height:20px;background:repeating-linear-gradient(180deg,#A8A8A8 0 1px,transparent 1px 2px);"></div>
<div class="a" style="left:1107px;top:545px;width:1px;height:20px;background:repeating-linear-gradient(180deg,#A8A8A8 0 1px,transparent 1px 2px);"></div>
<div class="a" style="left:248px;top:585px;width:865px;height:1px;background:repeating-linear-gradient(90deg,#A8A8A8 0 1px,transparent 1px 2px);"></div>
<div class="a" style="left:307px;top:565px;width:1px;height:20px;background:repeating-linear-gradient(180deg,#A8A8A8 0 1px,transparent 1px 2px);"></div>
<div class="a" style="left:522px;top:565px;width:1px;height:20px;background:repeating-linear-gradient(180deg,#A8A8A8 0 1px,transparent 1px 2px);"></div>
<div class="a" style="left:567px;top:565px;width:1px;height:20px;background:repeating-linear-gradient(180deg,#A8A8A8 0 1px,transparent 1px 2px);"></div>
<div class="a" style="left:612px;top:565px;width:1px;height:20px;background:repeating-linear-gradient(180deg,#A8A8A8 0 1px,transparent 1px 2px);"></div>
<div class="a" style="left:657px;top:565px;width:1px;height:20px;background:repeating-linear-gradient(180deg,#A8A8A8 0 1px,transparent 1px 2px);"></div>
<div class="a" style="left:702px;top:565px;width:1px;height:20px;background:repeating-linear-gradient(180deg,#A8A8A8 0 1px,transparent 1px 2px);"></div>
<div class="a" style="left:747px;top:565px;width:1px;height:20px;background:repeating-linear-gradient(180deg,#A8A8A8 0 1px,transparent 1px 2px);"></div>
<div class="a" style="left:792px;top:565px;width:1px;height:20px;background:repeating-linear-gradient(180deg,#A8A8A8 0 1px,transparent 1px 2px);"></div>
<div class="a" style="left:837px;top:565px;width:1px;height:20px;background:repeating-linear-gradient(180deg,#A8A8A8 0 1px,transparent 1px 2px);"></div>
<div class="a" style="left:882px;top:565px;width:1px;height:20px;background:repeating-linear-gradient(180deg,#A8A8A8 0 1px,transparent 1px 2px);"></div>
<div class="a" style="left:927px;top:565px;width:1px;height:20px;background:repeating-linear-gradient(180deg,#A8A8A8 0 1px,transparent 1px 2px);"></div>
<div class="a" style="left:972px;top:565px;width:1px;height:20px;background:repeating-linear-gradient(180deg,#A8A8A8 0 1px,transparent 1px 2px);"></div>
<div class="a" style="left:1017px;top:565px;width:1px;height:20px;background:repeating-linear-gradient(180deg,#A8A8A8 0 1px,transparent 1px 2px);"></div>
<div class="a" style="left:1062px;top:565px;width:1px;height:20px;background:repeating-linear-gradient(180deg,#A8A8A8 0 1px,transparent 1px 2px);"></div>
<div class="a" style="left:1107px;top:565px;width:1px;height:20px;background:repeating-linear-gradient(180deg,#A8A8A8 0 1px,transparent 1px 2px);"></div>
<div class="a" style="left:248px;top:605px;width:865px;height:1px;background:repeating-linear-gradient(90deg,#A8A8A8 0 1px,transparent 1px 2px);"></div>
<div class="a" style="left:307px;top:585px;width:1px;height:20px;background:repeating-linear-gradient(180deg,#A8A8A8 0 1px,transparent 1px 2px);"></div>
<div class="a" style="left:522px;top:585px;width:1px;height:20px;background:repeating-linear-gradient(180deg,#A8A8A8 0 1px,transparent 1px 2px);"></div>
<div class="a" style="left:567px;top:585px;width:1px;height:20px;background:repeating-linear-gradient(180deg,#A8A8A8 0 1px,transparent 1px 2px);"></div>
<div class="a" style="left:612px;top:585px;width:1px;height:20px;background:repeating-linear-gradient(180deg,#A8A8A8 0 1px,transparent 1px 2px);"></div>
<div class="a" style="left:657px;top:585px;width:1px;height:20px;background:repeating-linear-gradient(180deg,#A8A8A8 0 1px,transparent 1px 2px);"></div>
<div class="a" style="left:702px;top:585px;width:1px;height:20px;background:repeating-linear-gradient(180deg,#A8A8A8 0 1px,transparent 1px 2px);"></div>
<div class="a" style="left:747px;top:585px;width:1px;height:20px;background:repeating-linear-gradient(180deg,#A8A8A8 0 1px,transparent 1px 2px);"></div>
<div class="a" style="left:792px;top:585px;width:1px;height:20px;background:repeating-linear-gradient(180deg,#A8A8A8 0 1px,transparent 1px 2px);"></div>
<div class="a" style="left:837px;top:585px;width:1px;height:20px;background:repeating-linear-gradient(180deg,#A8A8A8 0 1px,transparent 1px 2px);"></div>
<div class="a" style="left:882px;top:585px;width:1px;height:20px;background:repeating-linear-gradient(180deg,#A8A8A8 0 1px,transparent 1px 2px);"></div>
<div class="a" style="left:927px;top:585px;width:1px;height:20px;background:repeating-linear-gradient(180deg,#A8A8A8 0 1px,transparent 1px 2px);"></div>
<div class="a" style="left:972px;top:585px;width:1px;height:20px;background:repeating-linear-gradient(180deg,#A8A8A8 0 1px,transparent 1px 2px);"></div>
<div class="a" style="left:1017px;top:585px;width:1px;height:20px;background:repeating-linear-gradient(180deg,#A8A8A8 0 1px,transparent 1px 2px);"></div>
<div class="a" style="left:1062px;top:585px;width:1px;height:20px;background:repeating-linear-gradient(180deg,#A8A8A8 0 1px,transparent 1px 2px);"></div>
<div class="a" style="left:1107px;top:585px;width:1px;height:20px;background:repeating-linear-gradient(180deg,#A8A8A8 0 1px,transparent 1px 2px);"></div>
<div class="a" style="left:248px;top:625px;width:865px;height:1px;background:repeating-linear-gradient(90deg,#A8A8A8 0 1px,transparent 1px 2px);"></div>
<div class="a" style="left:307px;top:605px;width:1px;height:20px;background:repeating-linear-gradient(180deg,#A8A8A8 0 1px,transparent 1px 2px);"></div>
<div class="a" style="left:522px;top:605px;width:1px;height:20px;background:repeating-linear-gradient(180deg,#A8A8A8 0 1px,transparent 1px 2px);"></div>
<div class="a" style="left:567px;top:605px;width:1px;height:20px;background:repeating-linear-gradient(180deg,#A8A8A8 0 1px,transparent 1px 2px);"></div>
<div class="a" style="left:612px;top:605px;width:1px;height:20px;background:repeating-linear-gradient(180deg,#A8A8A8 0 1px,transparent 1px 2px);"></div>
<div class="a" style="left:657px;top:605px;width:1px;height:20px;background:repeating-linear-gradient(180deg,#A8A8A8 0 1px,transparent 1px 2px);"></div>
<div class="a" style="left:702px;top:605px;width:1px;height:20px;background:repeating-linear-gradient(180deg,#A8A8A8 0 1px,transparent 1px 2px);"></div>
<div class="a" style="left:747px;top:605px;width:1px;height:20px;background:repeating-linear-gradient(180deg,#A8A8A8 0 1px,transparent 1px 2px);"></div>
<div class="a" style="left:792px;top:605px;width:1px;height:20px;background:repeating-linear-gradient(180deg,#A8A8A8 0 1px,transparent 1px 2px);"></div>
<div class="a" style="left:837px;top:605px;width:1px;height:20px;background:repeating-linear-gradient(180deg,#A8A8A8 0 1px,transparent 1px 2px);"></div>
<div class="a" style="left:882px;top:605px;width:1px;height:20px;background:repeating-linear-gradient(180deg,#A8A8A8 0 1px,transparent 1px 2px);"></div>
<div class="a" style="left:927px;top:605px;width:1px;height:20px;background:repeating-linear-gradient(180deg,#A8A8A8 0 1px,transparent 1px 2px);"></div>
<div class="a" style="left:972px;top:605px;width:1px;height:20px;background:repeating-linear-gradient(180deg,#A8A8A8 0 1px,transparent 1px 2px);"></div>
<div class="a" style="left:1017px;top:605px;width:1px;height:20px;background:repeating-linear-gradient(180deg,#A8A8A8 0 1px,transparent 1px 2px);"></div>
<div class="a" style="left:1062px;top:605px;width:1px;height:20px;background:repeating-linear-gradient(180deg,#A8A8A8 0 1px,transparent 1px 2px);"></div>
<div class="a" style="left:1107px;top:605px;width:1px;height:20px;background:repeating-linear-gradient(180deg,#A8A8A8 0 1px,transparent 1px 2px);"></div>
<div class="a" style="left:248px;top:627px;width:865px;height:1px;background:#C4D4EA;"></div>
<div class="a" style="left:248px;top:643px;width:865px;height:18px;background:#AFC9E7;"></div>
<div class="a" style="left:265px;top:643px;width:64px;height:18px;background:#D4D4D4;"></div>
<div class="a" style="left:643px;top:643px;width:454px;height:18px;background:#D4D4D4;"></div>
<svg class="a" style="left:254px;top:648px" width="6" height="9" viewBox="0 0 6 9"><path d="M5 0V8L0 4Z" fill="#000"/></svg>
<svg class="a" style="left:1102px;top:648px" width="6" height="9" viewBox="0 0 6 9"><path d="M0 0V8L5 4Z" fill="#000"/></svg>
<div class="a" style="left:276px;top:160px;width:336px;height:328px;background:#fff;border:1px solid #7FA3CF"></div>
<div class="a" style="left:277px;top:161px;width:334px;height:19px;background:#AFC9E7;"></div>
<div class="a" style="left:277px;top:180px;width:317px;height:1px;background:#7FA3CF;"></div>
<div class="a" style="left:326px;top:161px;width:1px;height:19px;background:#7FA3CF;"></div>
<div class="a" style="left:407px;top:161px;width:1px;height:19px;background:#7FA3CF;"></div>
<div class="a" style="left:477px;top:161px;width:1px;height:19px;background:#7FA3CF;"></div>
<svg class="a" style="left:289px;top:164px" width="13" height="13" viewBox="0 0 13 13"><rect x="0.5" y="0.5" width="12" height="12" fill="#fff" stroke="#8A8A8A"/><defs><linearGradient id="sa" x1="0" y1="0" x2="1" y2="1"><stop offset="0" stop-color="#5CC8F0"/><stop offset="1" stop-color="#1A4A90"/></linearGradient></defs><rect x="2.2" y="2.2" width="8.6" height="8.6" fill="url(#sa)" stroke="#0A3A70" stroke-width="0.6"/></svg>
<svg class="a" style="left:316px;top:166px" width="9" height="9" viewBox="0 0 9 9"><path d="M0 4.5H3M3 1V8M3 2H8.5V7H3" fill="none" stroke="#000" stroke-width="1.3"/></svg>
<svg class="a" style="left:397px;top:166px" width="9" height="9" viewBox="0 0 9 9"><path d="M0 4.5H3M3 1V8M3 2H8.5V7H3" fill="none" stroke="#000" stroke-width="1.3"/></svg>
<svg class="a" style="left:467px;top:166px" width="9" height="9" viewBox="0 0 9 9"><path d="M0 4.5H3M3 1V8M3 2H8.5V7H3" fill="none" stroke="#000" stroke-width="1.3"/></svg>
<div class="t" style="top:163.02px;font-size:11.5px;left:346px;">Số giờ</div>
<div class="t" style="top:163.02px;font-size:11.5px;left:419px;">Ký hiệu</div>
<div class="t" style="top:163.02px;font-size:11.5px;left:555px;">Diễn giải</div>
<div class="a" style="left:594px;top:161px;width:17px;height:19px;background:#AFC9E7;"></div>
<svg class="a" style="left:599px;top:167px" width="8" height="5" viewBox="0 0 8 5"><path d="M0 4.5L4 0L8 4.5Z" fill="#000"/></svg>
<div class="a" style="left:277px;top:181px;width:317px;height:289px;overflow:hidden">
<div class="a" style="left:0px;top:19px;width:317px;height:1px;background:repeating-linear-gradient(90deg,#A8A8A8 0 1px,transparent 1px 2px);"></div>
<div class="a" style="left:49px;top:0px;width:1px;height:20px;background:repeating-linear-gradient(180deg,#A8A8A8 0 1px,transparent 1px 2px);"></div>
<div class="a" style="left:130px;top:0px;width:1px;height:20px;background:repeating-linear-gradient(180deg,#A8A8A8 0 1px,transparent 1px 2px);"></div>
<div class="a" style="left:200px;top:0px;width:1px;height:20px;background:repeating-linear-gradient(180deg,#A8A8A8 0 1px,transparent 1px 2px);"></div>
<svg class="a" style="left:18px;top:3px" width="13" height="13" viewBox="0 0 13 13"><defs><linearGradient id="cb0" x1="0" y1="0" x2="1" y2="1"><stop offset="0" stop-color="#F4F4F4"/><stop offset="1" stop-color="#D0D0D0"/></linearGradient></defs><rect x="0.5" y="0.5" width="12" height="12" fill="#fff" stroke="#A8C0E0"/><rect x="2.5" y="2.5" width="8" height="8" fill="url(#cb0)"/><path d="M3.5 6.5L5.5 9.5L10 3" fill="none" stroke="#3A5A9A" stroke-width="1.6"/></svg>
<div class="t" style="top:2.19px;font-size:11px;right:190px;">8</div>
<div class="t" style="top:2.19px;font-size:11px;left:136px;">+</div>
<div class="t" style="top:2.19px;font-size:11px;left:206px;">Lương thời gian (cả ngày)</div>
<div class="a" style="left:0px;top:39px;width:317px;height:1px;background:repeating-linear-gradient(90deg,#A8A8A8 0 1px,transparent 1px 2px);"></div>
<div class="a" style="left:49px;top:20px;width:1px;height:20px;background:repeating-linear-gradient(180deg,#A8A8A8 0 1px,transparent 1px 2px);"></div>
<div class="a" style="left:130px;top:20px;width:1px;height:20px;background:repeating-linear-gradient(180deg,#A8A8A8 0 1px,transparent 1px 2px);"></div>
<div class="a" style="left:200px;top:20px;width:1px;height:20px;background:repeating-linear-gradient(180deg,#A8A8A8 0 1px,transparent 1px 2px);"></div>
<svg class="a" style="left:18px;top:23px" width="13" height="13" viewBox="0 0 13 13"><defs><linearGradient id="cb1" x1="0" y1="0" x2="1" y2="1"><stop offset="0" stop-color="#F4F4F4"/><stop offset="1" stop-color="#D0D0D0"/></linearGradient></defs><rect x="0.5" y="0.5" width="12" height="12" fill="#fff" stroke="#A8C0E0"/><rect x="2.5" y="2.5" width="8" height="8" fill="url(#cb1)"/></svg>
<div class="t" style="top:22.19px;font-size:11px;left:136px;">CN</div>
<div class="t" style="top:22.19px;font-size:11px;left:206px;">Chủ nhật</div>
<div class="a" style="left:0px;top:59px;width:317px;height:1px;background:repeating-linear-gradient(90deg,#A8A8A8 0 1px,transparent 1px 2px);"></div>
<div class="a" style="left:49px;top:40px;width:1px;height:20px;background:repeating-linear-gradient(180deg,#A8A8A8 0 1px,transparent 1px 2px);"></div>
<div class="a" style="left:130px;top:40px;width:1px;height:20px;background:repeating-linear-gradient(180deg,#A8A8A8 0 1px,transparent 1px 2px);"></div>
<div class="a" style="left:200px;top:40px;width:1px;height:20px;background:repeating-linear-gradient(180deg,#A8A8A8 0 1px,transparent 1px 2px);"></div>
<svg class="a" style="left:18px;top:43px" width="13" height="13" viewBox="0 0 13 13"><defs><linearGradient id="cb2" x1="0" y1="0" x2="1" y2="1"><stop offset="0" stop-color="#F4F4F4"/><stop offset="1" stop-color="#D0D0D0"/></linearGradient></defs><rect x="0.5" y="0.5" width="12" height="12" fill="#fff" stroke="#A8C0E0"/><rect x="2.5" y="2.5" width="8" height="8" fill="url(#cb2)"/></svg>
<div class="t" style="top:42.19px;font-size:11px;left:136px;">Cô</div>
<div class="t" style="top:42.19px;font-size:11px;left:206px;">Con ốm</div>
<div class="a" style="left:0px;top:79px;width:317px;height:1px;background:repeating-linear-gradient(90deg,#A8A8A8 0 1px,transparent 1px 2px);"></div>
<div class="a" style="left:49px;top:60px;width:1px;height:20px;background:repeating-linear-gradient(180deg,#A8A8A8 0 1px,transparent 1px 2px);"></div>
<div class="a" style="left:130px;top:60px;width:1px;height:20px;background:repeating-linear-gradient(180deg,#A8A8A8 0 1px,transparent 1px 2px);"></div>
<div class="a" style="left:200px;top:60px;width:1px;height:20px;background:repeating-linear-gradient(180deg,#A8A8A8 0 1px,transparent 1px 2px);"></div>
<svg class="a" style="left:18px;top:63px" width="13" height="13" viewBox="0 0 13 13"><defs><linearGradient id="cb3" x1="0" y1="0" x2="1" y2="1"><stop offset="0" stop-color="#F4F4F4"/><stop offset="1" stop-color="#D0D0D0"/></linearGradient></defs><rect x="0.5" y="0.5" width="12" height="12" fill="#fff" stroke="#A8C0E0"/><rect x="2.5" y="2.5" width="8" height="8" fill="url(#cb3)"/></svg>
<div class="t" style="top:62.19px;font-size:11px;left:136px;">Cô1/2</div>
<div class="t" style="top:62.19px;font-size:11px;left:206px;">Con ốm (nửa ngày)</div>
<div class="a" style="left:0px;top:80px;width:317px;height:20px;background:#FFF2CC;"></div>
<div class="a" style="left:0px;top:99px;width:317px;height:1px;background:repeating-linear-gradient(90deg,#A8A8A8 0 1px,transparent 1px 2px);"></div>
<div class="a" style="left:49px;top:80px;width:1px;height:20px;background:repeating-linear-gradient(180deg,#A8A8A8 0 1px,transparent 1px 2px);"></div>
<div class="a" style="left:130px;top:80px;width:1px;height:20px;background:repeating-linear-gradient(180deg,#A8A8A8 0 1px,transparent 1px 2px);"></div>
<div class="a" style="left:200px;top:80px;width:1px;height:20px;background:repeating-linear-gradient(180deg,#A8A8A8 0 1px,transparent 1px 2px);"></div>
<svg class="a" style="left:18px;top:83px" width="13" height="13" viewBox="0 0 13 13"><defs><linearGradient id="cb4" x1="0" y1="0" x2="1" y2="1"><stop offset="0" stop-color="#F4F4F4"/><stop offset="1" stop-color="#D0D0D0"/></linearGradient></defs><rect x="0.5" y="0.5" width="12" height="12" fill="#fff" stroke="#A8C0E0"/><rect x="2.5" y="2.5" width="8" height="8" fill="url(#cb4)"/><path d="M3.5 6.5L5.5 9.5L10 3" fill="none" stroke="#3A5A9A" stroke-width="1.6"/></svg>
<div class="a" style="left:50px;top:80px;width:80px;height:20px;background:#FFF2CC;border:1px solid #C8C0A8"></div>
<div class="a" style="left:51px;top:95px;width:64px;height:1px;background:#000;"></div>
<div class="t" style="top:82.19px;font-size:11px;right:190px;">15</div>
<div class="t" style="top:82.19px;font-size:11px;left:136px;">GTC</div>
<div class="t" style="top:82.19px;font-size:11px;left:206px;">Giờ tăng ca</div>
<div class="a" style="left:0px;top:119px;width:317px;height:1px;background:repeating-linear-gradient(90deg,#A8A8A8 0 1px,transparent 1px 2px);"></div>
<div class="a" style="left:49px;top:100px;width:1px;height:20px;background:repeating-linear-gradient(180deg,#A8A8A8 0 1px,transparent 1px 2px);"></div>
<div class="a" style="left:130px;top:100px;width:1px;height:20px;background:repeating-linear-gradient(180deg,#A8A8A8 0 1px,transparent 1px 2px);"></div>
<div class="a" style="left:200px;top:100px;width:1px;height:20px;background:repeating-linear-gradient(180deg,#A8A8A8 0 1px,transparent 1px 2px);"></div>
<svg class="a" style="left:18px;top:103px" width="13" height="13" viewBox="0 0 13 13"><defs><linearGradient id="cb5" x1="0" y1="0" x2="1" y2="1"><stop offset="0" stop-color="#F4F4F4"/><stop offset="1" stop-color="#D0D0D0"/></linearGradient></defs><rect x="0.5" y="0.5" width="12" height="12" fill="#fff" stroke="#A8C0E0"/><rect x="2.5" y="2.5" width="8" height="8" fill="url(#cb5)"/></svg>
<div class="t" style="top:102.19px;font-size:11px;left:136px;">H</div>
<div class="t" style="top:102.19px;font-size:11px;left:206px;">Hội nghị, học tập</div>
<div class="a" style="left:0px;top:139px;width:317px;height:1px;background:repeating-linear-gradient(90deg,#A8A8A8 0 1px,transparent 1px 2px);"></div>
<div class="a" style="left:49px;top:120px;width:1px;height:20px;background:repeating-linear-gradient(180deg,#A8A8A8 0 1px,transparent 1px 2px);"></div>
<div class="a" style="left:130px;top:120px;width:1px;height:20px;background:repeating-linear-gradient(180deg,#A8A8A8 0 1px,transparent 1px 2px);"></div>
<div class="a" style="left:200px;top:120px;width:1px;height:20px;background:repeating-linear-gradient(180deg,#A8A8A8 0 1px,transparent 1px 2px);"></div>
<svg class="a" style="left:18px;top:123px" width="13" height="13" viewBox="0 0 13 13"><defs><linearGradient id="cb6" x1="0" y1="0" x2="1" y2="1"><stop offset="0" stop-color="#F4F4F4"/><stop offset="1" stop-color="#D0D0D0"/></linearGradient></defs><rect x="0.5" y="0.5" width="12" height="12" fill="#fff" stroke="#A8C0E0"/><rect x="2.5" y="2.5" width="8" height="8" fill="url(#cb6)"/></svg>
<div class="t" style="top:122.19px;font-size:11px;left:136px;">H1/2</div>
<div class="t" style="top:122.19px;font-size:11px;left:206px;">Hội nghị, học tập (nửa ngày)</div>
<div class="a" style="left:0px;top:159px;width:317px;height:1px;background:repeating-linear-gradient(90deg,#A8A8A8 0 1px,transparent 1px 2px);"></div>
<div class="a" style="left:49px;top:140px;width:1px;height:20px;background:repeating-linear-gradient(180deg,#A8A8A8 0 1px,transparent 1px 2px);"></div>
<div class="a" style="left:130px;top:140px;width:1px;height:20px;background:repeating-linear-gradient(180deg,#A8A8A8 0 1px,transparent 1px 2px);"></div>
<div class="a" style="left:200px;top:140px;width:1px;height:20px;background:repeating-linear-gradient(180deg,#A8A8A8 0 1px,transparent 1px 2px);"></div>
<svg class="a" style="left:18px;top:143px" width="13" height="13" viewBox="0 0 13 13"><defs><linearGradient id="cb7" x1="0" y1="0" x2="1" y2="1"><stop offset="0" stop-color="#F4F4F4"/><stop offset="1" stop-color="#D0D0D0"/></linearGradient></defs><rect x="0.5" y="0.5" width="12" height="12" fill="#fff" stroke="#A8C0E0"/><rect x="2.5" y="2.5" width="8" height="8" fill="url(#cb7)"/></svg>
<div class="t" style="top:142.19px;font-size:11px;left:136px;">KL</div>
<div class="t" style="top:142.19px;font-size:11px;left:206px;">Nghỉ không lương</div>
<div class="a" style="left:0px;top:179px;width:317px;height:1px;background:repeating-linear-gradient(90deg,#A8A8A8 0 1px,transparent 1px 2px);"></div>
<div class="a" style="left:49px;top:160px;width:1px;height:20px;background:repeating-linear-gradient(180deg,#A8A8A8 0 1px,transparent 1px 2px);"></div>
<div class="a" style="left:130px;top:160px;width:1px;height:20px;background:repeating-linear-gradient(180deg,#A8A8A8 0 1px,transparent 1px 2px);"></div>
<div class="a" style="left:200px;top:160px;width:1px;height:20px;background:repeating-linear-gradient(180deg,#A8A8A8 0 1px,transparent 1px 2px);"></div>
<svg class="a" style="left:18px;top:163px" width="13" height="13" viewBox="0 0 13 13"><defs><linearGradient id="cb8" x1="0" y1="0" x2="1" y2="1"><stop offset="0" stop-color="#F4F4F4"/><stop offset="1" stop-color="#D0D0D0"/></linearGradient></defs><rect x="0.5" y="0.5" width="12" height="12" fill="#fff" stroke="#A8C0E0"/><rect x="2.5" y="2.5" width="8" height="8" fill="url(#cb8)"/></svg>
<div class="t" style="top:162.19px;font-size:11px;left:136px;">KL1/2</div>
<div class="t" style="top:162.19px;font-size:11px;left:206px;">Nghỉ không lương (nửa ngày)</div>
<div class="a" style="left:0px;top:199px;width:317px;height:1px;background:repeating-linear-gradient(90deg,#A8A8A8 0 1px,transparent 1px 2px);"></div>
<div class="a" style="left:49px;top:180px;width:1px;height:20px;background:repeating-linear-gradient(180deg,#A8A8A8 0 1px,transparent 1px 2px);"></div>
<div class="a" style="left:130px;top:180px;width:1px;height:20px;background:repeating-linear-gradient(180deg,#A8A8A8 0 1px,transparent 1px 2px);"></div>
<div class="a" style="left:200px;top:180px;width:1px;height:20px;background:repeating-linear-gradient(180deg,#A8A8A8 0 1px,transparent 1px 2px);"></div>
<svg class="a" style="left:18px;top:183px" width="13" height="13" viewBox="0 0 13 13"><defs><linearGradient id="cb9" x1="0" y1="0" x2="1" y2="1"><stop offset="0" stop-color="#F4F4F4"/><stop offset="1" stop-color="#D0D0D0"/></linearGradient></defs><rect x="0.5" y="0.5" width="12" height="12" fill="#fff" stroke="#A8C0E0"/><rect x="2.5" y="2.5" width="8" height="8" fill="url(#cb9)"/></svg>
<div class="t" style="top:182.19px;font-size:11px;left:136px;">LĐ</div>
<div class="t" style="top:182.19px;font-size:11px;left:206px;">Lao động nghĩa vụ</div>
<div class="a" style="left:0px;top:219px;width:317px;height:1px;background:repeating-linear-gradient(90deg,#A8A8A8 0 1px,transparent 1px 2px);"></div>
<div class="a" style="left:49px;top:200px;width:1px;height:20px;background:repeating-linear-gradient(180deg,#A8A8A8 0 1px,transparent 1px 2px);"></div>
<div class="a" style="left:130px;top:200px;width:1px;height:20px;background:repeating-linear-gradient(180deg,#A8A8A8 0 1px,transparent 1px 2px);"></div>
<div class="a" style="left:200px;top:200px;width:1px;height:20px;background:repeating-linear-gradient(180deg,#A8A8A8 0 1px,transparent 1px 2px);"></div>
<svg class="a" style="left:18px;top:203px" width="13" height="13" viewBox="0 0 13 13"><defs><linearGradient id="cb10" x1="0" y1="0" x2="1" y2="1"><stop offset="0" stop-color="#F4F4F4"/><stop offset="1" stop-color="#D0D0D0"/></linearGradient></defs><rect x="0.5" y="0.5" width="12" height="12" fill="#fff" stroke="#A8C0E0"/><rect x="2.5" y="2.5" width="8" height="8" fill="url(#cb10)"/></svg>
<div class="t" style="top:202.19px;font-size:11px;left:136px;">LĐ1/2</div>
<div class="t" style="top:202.19px;font-size:11px;left:206px;">Lao động nghĩa vụ (nửa ngày)</div>
<div class="a" style="left:0px;top:239px;width:317px;height:1px;background:repeating-linear-gradient(90deg,#A8A8A8 0 1px,transparent 1px 2px);"></div>
<div class="a" style="left:49px;top:220px;width:1px;height:20px;background:repeating-linear-gradient(180deg,#A8A8A8 0 1px,transparent 1px 2px);"></div>
<div class="a" style="left:130px;top:220px;width:1px;height:20px;background:repeating-linear-gradient(180deg,#A8A8A8 0 1px,transparent 1px 2px);"></div>
<div class="a" style="left:200px;top:220px;width:1px;height:20px;background:repeating-linear-gradient(180deg,#A8A8A8 0 1px,transparent 1px 2px);"></div>
<svg class="a" style="left:18px;top:223px" width="13" height="13" viewBox="0 0 13 13"><defs><linearGradient id="cb11" x1="0" y1="0" x2="1" y2="1"><stop offset="0" stop-color="#F4F4F4"/><stop offset="1" stop-color="#D0D0D0"/></linearGradient></defs><rect x="0.5" y="0.5" width="12" height="12" fill="#fff" stroke="#A8C0E0"/><rect x="2.5" y="2.5" width="8" height="8" fill="url(#cb11)"/></svg>
<div class="t" style="top:222.19px;font-size:11px;left:136px;">LTNT BĐ</div>
<div class="t" style="top:222.19px;font-size:11px;left:206px;">Tăng ca ngày thường</div>
<div class="a" style="left:0px;top:259px;width:317px;height:1px;background:repeating-linear-gradient(90deg,#A8A8A8 0 1px,transparent 1px 2px);"></div>
<div class="a" style="left:49px;top:240px;width:1px;height:20px;background:repeating-linear-gradient(180deg,#A8A8A8 0 1px,transparent 1px 2px);"></div>
<div class="a" style="left:130px;top:240px;width:1px;height:20px;background:repeating-linear-gradient(180deg,#A8A8A8 0 1px,transparent 1px 2px);"></div>
<div class="a" style="left:200px;top:240px;width:1px;height:20px;background:repeating-linear-gradient(180deg,#A8A8A8 0 1px,transparent 1px 2px);"></div>
<svg class="a" style="left:18px;top:243px" width="13" height="13" viewBox="0 0 13 13"><defs><linearGradient id="cb12" x1="0" y1="0" x2="1" y2="1"><stop offset="0" stop-color="#F4F4F4"/><stop offset="1" stop-color="#D0D0D0"/></linearGradient></defs><rect x="0.5" y="0.5" width="12" height="12" fill="#fff" stroke="#A8C0E0"/><rect x="2.5" y="2.5" width="8" height="8" fill="url(#cb12)"/></svg>
<div class="t" style="top:242.19px;font-size:11px;left:136px;">N</div>
<div class="t" style="top:242.19px;font-size:11px;left:206px;">Ngừng việc</div>
<div class="a" style="left:0px;top:279px;width:317px;height:1px;background:repeating-linear-gradient(90deg,#A8A8A8 0 1px,transparent 1px 2px);"></div>
<div class="a" style="left:49px;top:260px;width:1px;height:20px;background:repeating-linear-gradient(180deg,#A8A8A8 0 1px,transparent 1px 2px);"></div>
<div class="a" style="left:130px;top:260px;width:1px;height:20px;background:repeating-linear-gradient(180deg,#A8A8A8 0 1px,transparent 1px 2px);"></div>
<div class="a" style="left:200px;top:260px;width:1px;height:20px;background:repeating-linear-gradient(180deg,#A8A8A8 0 1px,transparent 1px 2px);"></div>
<svg class="a" style="left:18px;top:263px" width="13" height="13" viewBox="0 0 13 13"><defs><linearGradient id="cb13" x1="0" y1="0" x2="1" y2="1"><stop offset="0" stop-color="#F4F4F4"/><stop offset="1" stop-color="#D0D0D0"/></linearGradient></defs><rect x="0.5" y="0.5" width="12" height="12" fill="#fff" stroke="#A8C0E0"/><rect x="2.5" y="2.5" width="8" height="8" fill="url(#cb13)"/></svg>
<div class="t" style="top:262.19px;font-size:11px;left:136px;">N1/2</div>
<div class="t" style="top:262.19px;font-size:11px;left:206px;">Ngừng việc (nửa ngày)</div>
<div class="a" style="left:0px;top:299px;width:317px;height:1px;background:repeating-linear-gradient(90deg,#A8A8A8 0 1px,transparent 1px 2px);"></div>
<div class="a" style="left:49px;top:280px;width:1px;height:20px;background:repeating-linear-gradient(180deg,#A8A8A8 0 1px,transparent 1px 2px);"></div>
<div class="a" style="left:130px;top:280px;width:1px;height:20px;background:repeating-linear-gradient(180deg,#A8A8A8 0 1px,transparent 1px 2px);"></div>
<div class="a" style="left:200px;top:280px;width:1px;height:20px;background:repeating-linear-gradient(180deg,#A8A8A8 0 1px,transparent 1px 2px);"></div>
<svg class="a" style="left:18px;top:283px" width="13" height="13" viewBox="0 0 13 13"><defs><linearGradient id="cb14" x1="0" y1="0" x2="1" y2="1"><stop offset="0" stop-color="#F4F4F4"/><stop offset="1" stop-color="#D0D0D0"/></linearGradient></defs><rect x="0.5" y="0.5" width="12" height="12" fill="#fff" stroke="#A8C0E0"/><rect x="2.5" y="2.5" width="8" height="8" fill="url(#cb14)"/></svg>
<div class="t" style="top:282.19px;font-size:11px;left:136px;">NB</div>
<div class="t" style="top:282.19px;font-size:11px;left:206px;">Nghỉ bù</div>
</div>
<div class="a" style="left:594px;top:180px;width:17px;height:128px;background:#AFC9E7;"></div>
<div class="a" style="left:594px;top:308px;width:17px;height:145px;background:#D4D4D4;"></div>
<div class="a" style="left:594px;top:453px;width:17px;height:17px;background:#AFC9E7;"></div>
<svg class="a" style="left:599px;top:459px" width="8" height="5" viewBox="0 0 8 5"><path d="M0 0H8L4 4.5Z" fill="#000"/></svg>
<div class="a" style="left:277px;top:470px;width:317px;height:17px;background:#AFC9E7;"></div>
<div class="a" style="left:507px;top:470px;width:70px;height:17px;background:#D4D4D4;"></div>
<svg class="a" style="left:282px;top:474px" width="6" height="9" viewBox="0 0 6 9"><path d="M5 0V8L0 4Z" fill="#000"/></svg>
<svg class="a" style="left:583px;top:474px" width="6" height="9" viewBox="0 0 6 9"><path d="M0 0V8L5 4Z" fill="#000"/></svg>
<div class="a" style="left:594px;top:470px;width:17px;height:17px;background:#EDEDED;"></div>
<div class="a" style="left:0px;top:702px;width:1360px;height:25px;background:#C9DAF0;"></div>
<div class="a" style="left:2px;top:707px;width:198px;height:19px;background:#BCD2EC;border:1px solid #8FB0D8"></div>
<div class="a" style="left:203px;top:707px;width:231px;height:19px;background:#BCD2EC;border:1px solid #8FB0D8"></div>
<div class="a" style="left:437px;top:707px;width:118px;height:19px;background:#BCD2EC;border:1px solid #8FB0D8"></div>
<div class="a" style="left:558px;top:707px;width:9px;height:19px;background:#BCD2EC;border:1px solid #8FB0D8"></div>
<div class="a" style="left:569px;top:707px;width:376px;height:19px;background:#BCD2EC;border:1px solid #8FB0D8"></div>
<div class="a" style="left:948px;top:707px;width:147px;height:19px;background:#BCD2EC;border:1px solid #8FB0D8"></div>
<div class="a" style="left:1097px;top:707px;width:30px;height:19px;background:#BCD2EC;border:1px solid #8FB0D8"></div>
<div class="a" style="left:1130px;top:707px;width:31px;height:19px;background:#BCD2EC;border:1px solid #8FB0D8"></div>
<div class="a" style="left:1164px;top:707px;width:36px;height:19px;background:#BCD2EC;border:1px solid #8FB0D8"></div>
<div class="a" style="left:1203px;top:707px;width:35px;height:19px;background:#BCD2EC;border:1px solid #8FB0D8"></div>
<div class="a" style="left:1241px;top:707px;width:53px;height:19px;background:#BCD2EC;border:1px solid #8FB0D8"></div>
<div class="a" style="left:1297px;top:707px;width:60px;height:19px;background:#BCD2EC;border:1px solid #8FB0D8"></div>
<svg class="a" style="left:6px;top:709px" width="15" height="16" viewBox="0 0 15 16"><rect x="2" y="0.5" width="11" height="14" fill="#C8C0E0" stroke="#7A70A0"/><path d="M4 3H11M4 5H11" stroke="#7A70A0"/><circle cx="5.5" cy="11" r="4.5" fill="#30A040" stroke="#fff"/><path d="M3.2 11L5 12.8L8 9" fill="none" stroke="#fff" stroke-width="1.3"/></svg>
<div class="t" style="top:709.26px;font-size:10.8px;left:22px;">Máy chủ: THIETKE\MISASME2017</div>
<svg class="a" style="left:206px;top:709px" width="13" height="16" viewBox="0 0 13 16"><ellipse cx="6.5" cy="3" rx="5.5" ry="2.5" fill="#FFF0A0" stroke="#C8A820"/><path d="M1 3V13Q6.5 16 12 13V3" fill="#F8D850" stroke="#C8A820"/><path d="M1 8Q6.5 11 12 8" fill="none" stroke="#C8A820"/></svg>
<div class="t" style="top:709.20px;font-size:10.96px;left:222px;">Tên DLKT: KETOANNAM2018_2017KQA</div>
<svg class="a" style="left:439px;top:709px" width="14" height="16" viewBox="0 0 14 16"><circle cx="8" cy="4" r="3" fill="#F0C890" stroke="#806040" stroke-width="0.6"/><path d="M2 15Q2 8 8 8Q13 8 13 15Z" fill="#4A90E0" stroke="#2A5AA0" stroke-width="0.6"/></svg>
<div class="t" style="top:709.29px;font-size:10.71px;left:456px;">Người dùng: Admin</div>
<div class="t" style="top:709.15px;font-size:11.11px;font-weight:bold;left:951px;">Tổng đài tư vấn: 1900 8677</div>
<div class="t" style="top:709.16px;font-size:11.08px;left:1100px;">OVR</div>
<div class="t" style="top:709.35px;font-size:10.54px;left:1133px;">NUM</div>
<div class="t" style="top:709.32px;font-size:10.63px;left:1244px;">4:51 CH</div>
<div class="t" style="top:709.19px;font-size:10.99px;left:1299px;">03/06/2020</div>
<div class="a" style="left:0px;top:727px;width:1360px;height:41px;background:#202E35;"></div>
<div class="a" style="left:0px;top:727px;width:1360px;height:1px;background:#2A3840;"></div>
<svg class="a" style="left:16px;top:740px" width="17" height="17" viewBox="0 0 17 17"><path d="M0 2.5L7 1.5V8H0Z M8 1.3L17 0V8H8Z M0 9H7V15.5L0 14.5Z M8 9H17V17L8 15.7Z" fill="#fff"/></svg>
<svg class="a" style="left:63px;top:739px" width="18" height="18" viewBox="0 0 18 18"><circle cx="11" cy="7" r="5.5" fill="none" stroke="#fff" stroke-width="1.5"/><path d="M7 11L1.5 16.5" stroke="#fff" stroke-width="1.6"/></svg>
<svg class="a" style="left:111px;top:739px" width="18" height="18" viewBox="0 0 18 18"><circle cx="9" cy="9" r="7.3" fill="none" stroke="#fff" stroke-width="2"/></svg>
<svg class="a" style="left:159px;top:740px" width="19" height="17" viewBox="0 0 19 17"><rect x="1" y="3" width="12" height="9" fill="none" stroke="#fff" stroke-width="1.4"/><path d="M0 1H14M0 15H14" stroke="#fff" stroke-width="1.4"/><rect x="16" y="2" width="2" height="3" fill="#fff"/><rect x="16" y="7" width="1.5" height="8" fill="#fff"/></svg>
<svg class="a" style="left:209px;top:737px" width="22" height="23" viewBox="0 0 22 23"><path d="M1 9Q3 2 11 1.5Q20 1.5 20.5 11.5H7.5Q8 17 13.5 17Q17.5 17 19.5 15V20.5Q16.5 22 12.5 22Q3 22 3 13Q3 9 6 6Q3 7 1 9Z M7.8 9H14.5Q14.3 5.5 11.2 5.5Q8.5 5.5 7.8 9Z" fill="#1A7CDC"/></svg>
<svg class="a" style="left:256px;top:736px" width="24" height="24" viewBox="0 0 24 24"><circle cx="12" cy="12" r="11.5" fill="#DB4437"/><path d="M12 12L22.5 8A11.5 11.5 0 0 1 7 22.4Z" fill="#F4C20D"/><path d="M12 12L7 22.4A11.5 11.5 0 0 1 1.5 6Z" fill="#0F9D58"/><circle cx="12" cy="12" r="5.3" fill="#fff"/><circle cx="12" cy="12" r="4.2" fill="#4285F4"/></svg>
<svg class="a" style="left:305px;top:737px" width="24" height="22" viewBox="0 0 24 22"><path d="M1 3H9L11 5H23V20H1Z" fill="#E8B020"/><rect x="1" y="7" width="22" height="13" fill="#F8D060"/><rect x="6" y="14" width="12" height="3" fill="#2E8BE0"/><rect x="6" y="14" width="2.5" height="7" fill="#2E8BE0"/><rect x="15.5" y="14" width="2.5" height="7" fill="#2E8BE0"/></svg>
<svg class="a" style="left:353px;top:736px" width="25" height="24" viewBox="0 0 25 24"><rect x="8" y="2" width="16" height="20" fill="#21A366"/><rect x="8" y="2" width="16" height="6" fill="#33C481"/><rect x="8" y="15" width="16" height="7" fill="#107C41"/><rect x="1" y="6" width="13" height="13" fill="#107C41"/><path d="M4 9L11 16M11 9L4 16" stroke="#fff" stroke-width="2"/></svg>
<svg class="a" style="left:403px;top:737px" width="24" height="22" viewBox="0 0 24 22"><rect x="1" y="1" width="22" height="20" fill="#fff"/><rect x="2.5" y="2.5" width="19" height="17" fill="#202E35"/><path d="M2.5 19.5L9 9L13 14L16 10L21.5 19.5Z" fill="#fff"/></svg>
<div class="a" style="left:440px;top:728px;width:44px;height:40px;background:#46535A;"></div>
<svg class="a" style="left:452px;top:736px" width="24" height="24" viewBox="0 0 24 24"><circle cx="12" cy="12" r="11.6" fill="#fff"/><g transform="rotate(-28 12 12)"><path d="M12 12 L12 1.2 A10.8 10.8 0 0 1 22.8 12 Z" fill="#F2B01E"/><path d="M12 12 L22.8 12 A10.8 10.8 0 0 1 12 22.8 Z" fill="#2E44BC"/><path d="M12 12 L12 22.8 A10.8 10.8 0 0 1 1.2 12 Z" fill="#12913A"/><path d="M12 12 L1.2 12 A10.8 10.8 0 0 1 12 1.2 Z" fill="#D0202E"/><rect x="9.5" y="9.5" width="5" height="5" transform="rotate(45 12 12)" fill="#fff"/></g></svg>
<div class="a" style="left:484px;top:728px;width:3px;height:40px;background:#2A363C;"></div>
<svg class="a" style="left:500px;top:736px" width="26" height="25" viewBox="0 0 26 25"><path d="M13 1Q25 1 25 12Q25 23 13 23Q9 23 6 21.5L1.5 23.5L3 19Q1 16 1 12Q1 1 13 1Z" fill="#fff"/><path d="M13 3Q23 3 23 12Q23 21 13 21Q9 21 6.5 19.5L3.8 20.5L4.6 17.8Q3 15.5 3 12Q3 3 13 3Z" fill="#0B7CFF"/><text x="5" y="15.5" font-size="8" fill="#fff" font-family="Liberation Sans" font-weight="bold">Zalo</text></svg>
<div class="a" style="left:199px;top:766px;width:40px;height:2px;background:#6FB4EA;"></div>
<div class="a" style="left:248px;top:766px;width:40px;height:2px;background:#6FB4EA;"></div>
<div class="a" style="left:297px;top:766px;width:40px;height:2px;background:#6FB4EA;"></div>
<div class="a" style="left:346px;top:766px;width:40px;height:2px;background:#6FB4EA;"></div>
<div class="a" style="left:395px;top:766px;width:40px;height:2px;background:#6FB4EA;"></div>
<div class="a" style="left:440px;top:766px;width:44px;height:2px;background:#6FB4EA;"></div>
<div class="a" style="left:494px;top:766px;width:40px;height:2px;background:#6FB4EA;"></div>
<svg class="a" style="left:1110px;top:743px" width="14" height="9" viewBox="0 0 14 9"><path d="M1 8L7 2L13 8" fill="none" stroke="#fff" stroke-width="1.4"/></svg>
<svg class="a" style="left:1132px;top:741px" width="17" height="15" viewBox="0 0 17 15"><rect x="0.5" y="0.5" width="16" height="14" fill="#F2D8D8" stroke="#C8A0A0"/><path d="M3 2.5L8 12.5L13.5 2.5" fill="none" stroke="#E01818" stroke-width="2.6"/></svg>
<svg class="a" style="left:1157px;top:741px" width="17" height="16" viewBox="0 0 17 16"><rect x="4.5" y="3.5" width="12" height="8" fill="none" stroke="#fff"/><path d="M10.5 11.5V14M6 14.5H15" stroke="#fff"/><rect x="0.5" y="0.5" width="5" height="4" fill="#1E2A31" stroke="#fff"/><path d="M3 4.5V15" stroke="#fff"/></svg>
<svg class="a" style="left:1180px;top:741px" width="18" height="16" viewBox="0 0 18 16"><path d="M1 5.5H4L8 1.5V14.5L4 10.5H1Z" fill="none" stroke="#fff" stroke-width="1.1"/><path d="M10.5 5Q12 8 10.5 11M13 3Q15.5 8 13 13M15.5 1.5Q19 8 15.5 14.5" fill="none" stroke="#fff" stroke-width="1.1"/></svg>
<div class="t" style="top:740.02px;font-size:11.5px;color:#fff;left:1207.5px;letter-spacing:-0.974px;">ENG</div>
<div class="t" style="top:731.02px;font-size:11.5px;color:#fff;left:1251px;letter-spacing:-0.161px;">4:51 PM</div>
<div class="t" style="top:750.02px;font-size:11.5px;color:#fff;left:1243px;letter-spacing:0.045px;">03/06/2020</div>
<svg class="a" style="left:1318px;top:739px" width="25" height="25" viewBox="0 0 25 25"><path d="M1.5 1.5H16.5V12.5H8L5 15V12.5H1.5Z" fill="#fff"/><path d="M4 4.5H14M4 7H14M4 9.5H14" stroke="#1E2A31" stroke-width="1"/><circle cx="16" cy="16" r="7.2" fill="#1E2A31" stroke="#888" stroke-width="1.3"/><text x="12.3" y="20" font-size="10.5" fill="#fff" font-family="Liberation Sans">3</text></svg>
<div class="a" style="left:1355px;top:728px;width:1px;height:40px;background:#505C62;"></div>
</body></html>
